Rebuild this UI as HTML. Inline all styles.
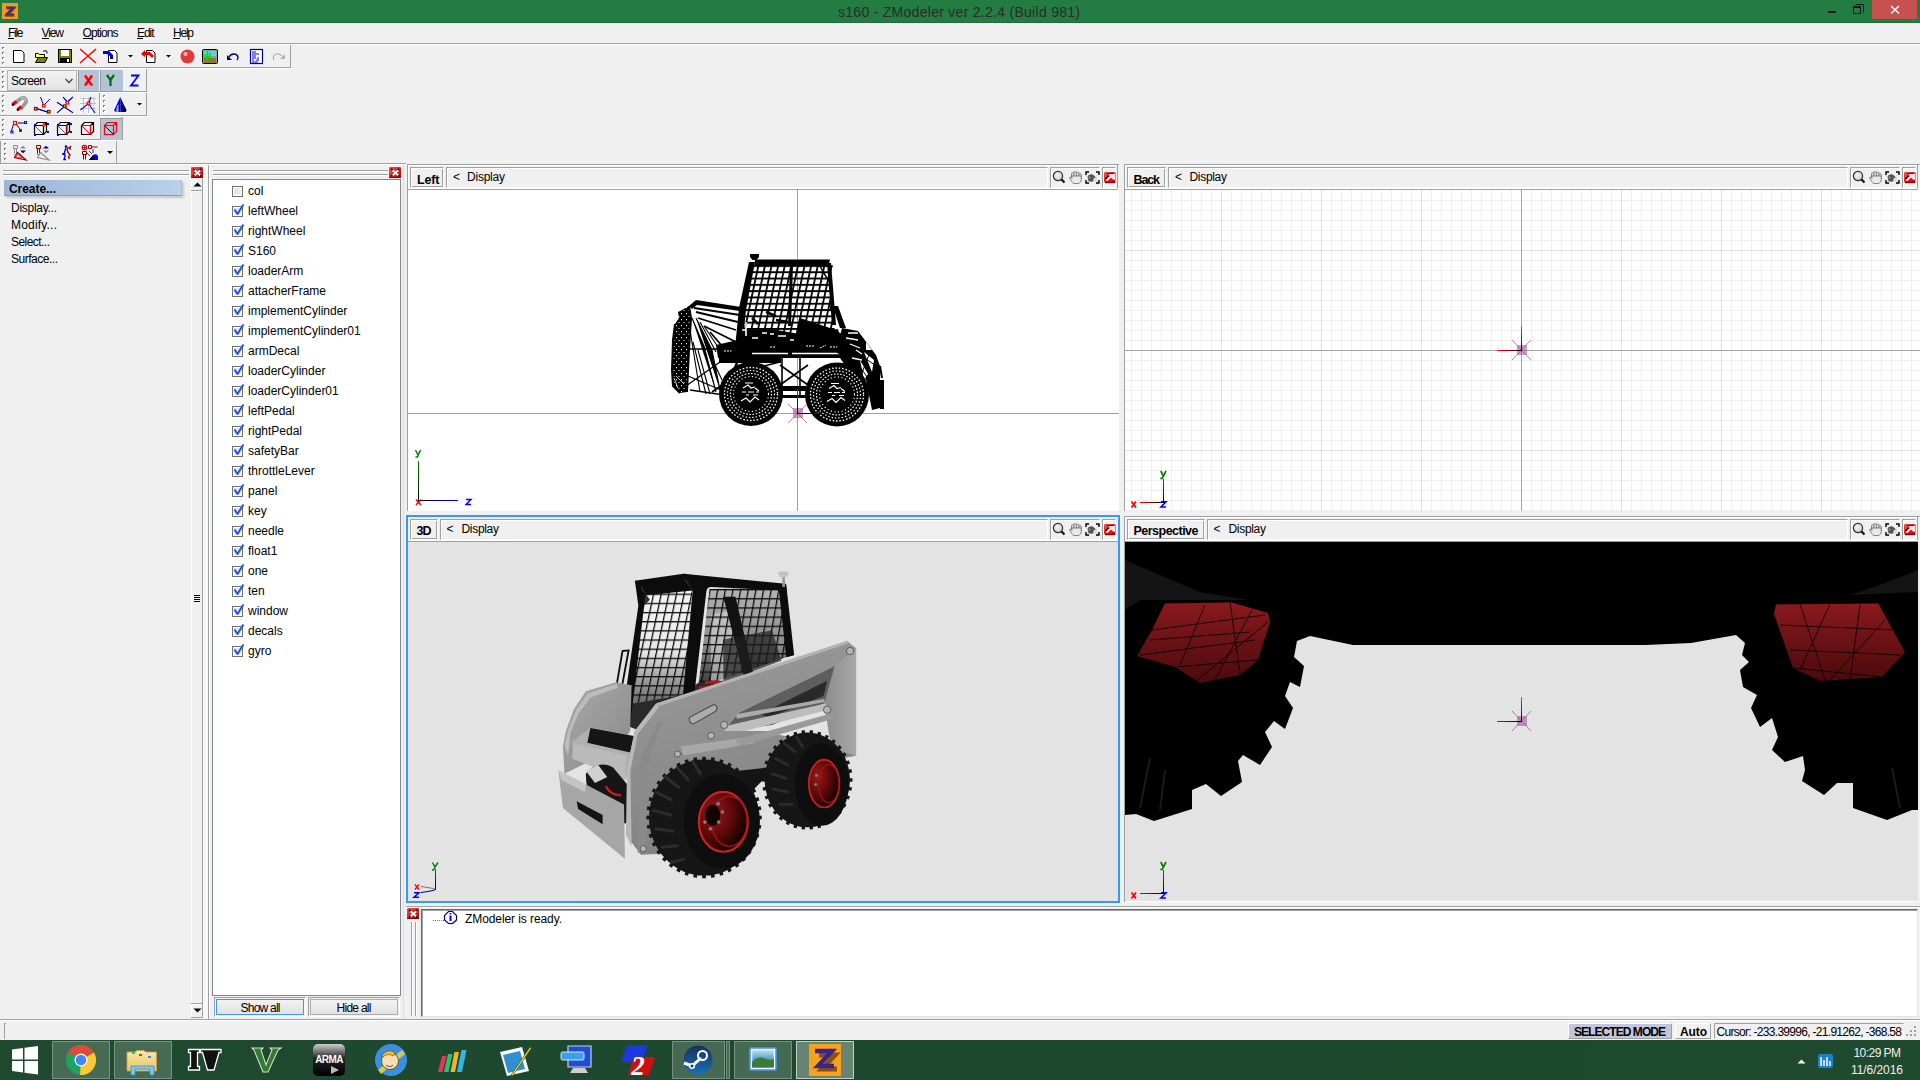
<!DOCTYPE html>
<html><head><meta charset="utf-8">
<style>
*{margin:0;padding:0;box-sizing:border-box}
html,body{width:1920px;height:1080px;overflow:hidden;background:#f0f0f0;font-family:"Liberation Sans",sans-serif;font-size:12px;color:#000}
.a{position:absolute}
.t{position:absolute;white-space:pre;line-height:1}
.hl{position:absolute;height:1px}
.vl{position:absolute;width:1px}
.g{background:#a0a0a0}
.w{background:#fff}
</style></head><body>
<!-- title bar -->
<div class="a" style="left:0;top:0;width:1920px;height:23px;background:#237c41"></div>
<div class="a" style="left:0;top:22px;width:1920px;height:1px;background:#1d6e39"></div>
<!-- window buttons -->
<div class="a" style="left:1872px;top:0;width:45px;height:19px;background:#c75050"></div>
<div class="a" style="left:1828px;top:11px;width:8px;height:2px;background:#1a1a1a"></div>
<svg class="a" style="left:1850px;top:2px" width="16" height="14" viewBox="1850 2 16 14"><path d="M1855.5 4.5h8v8" fill="none" stroke="#1a1a1a"/><rect x="1853.5" y="6.5" width="7" height="7" fill="none" stroke="#1a1a1a"/><rect x="1853" y="6" width="8" height="2" fill="#1a1a1a"/></svg>
<svg class="a" style="left:1889px;top:4px" width="12" height="12" viewBox="1889 4 12 12"><path d="M1891 6L1899 13.5M1899 6L1891 13.5" stroke="#fff" stroke-width="1.5"/></svg>
<!-- app icon -->
<div class="a" style="left:2px;top:3px;width:16px;height:16px;background:#f39a1e"></div>
<svg class="a" style="left:2px;top:3px" width="16" height="16"><path d="M5 5.5h7l-6.5 7h7" fill="none" stroke="#6a4210" stroke-width="2.4" opacity="0.8"/><path d="M4 4.5h7.5l-7 7h7.5" fill="none" stroke="#3c2594" stroke-width="2.2"/></svg>
<!-- menu underlines -->
<div class="hl" style="left:8px;top:38px;width:6px;background:#000"></div>
<div class="hl" style="left:42px;top:38px;width:7px;background:#000"></div>
<div class="hl" style="left:83px;top:38px;width:9px;background:#000"></div>
<div class="hl" style="left:137px;top:38px;width:6px;background:#000"></div>
<div class="hl" style="left:173px;top:38px;width:7px;background:#000"></div>
<div class="hl g" style="left:0;top:43px;width:1920px"></div>
<div class="hl w" style="left:0;top:44px;width:1920px"></div>
<!-- toolbar frames -->
<div class="a" style="left:0;top:45px;width:291px;height:23px;border-right:1px solid #a0a0a0;border-bottom:1px solid #a0a0a0"></div>
<div class="hl w" style="left:0;top:68px;width:292px"></div>
<div class="a" style="left:0;top:69px;width:147px;height:23px;border-right:1px solid #a0a0a0;border-bottom:1px solid #a0a0a0"></div>
<div class="hl w" style="left:0;top:92px;width:148px"></div>
<div class="a" style="left:0;top:93px;width:100px;height:23px;border-right:1px solid #a0a0a0;border-bottom:1px solid #a0a0a0"></div>
<div class="a" style="left:100px;top:93px;width:47px;height:23px;border-right:1px solid #a0a0a0;border-bottom:1px solid #a0a0a0;border-left:1px solid #fff"></div>
<div class="hl w" style="left:0;top:116px;width:148px"></div>
<div class="a" style="left:0;top:117px;width:123px;height:23px;border-right:1px solid #a0a0a0;border-bottom:1px solid #a0a0a0"></div>
<div class="hl w" style="left:0;top:140px;width:124px"></div>
<div class="a" style="left:0;top:141px;width:117px;height:23px;border-right:1px solid #a0a0a0;border-bottom:1px solid #a0a0a0;border-left:1px solid #a0a0a0"></div>
<!-- highlighted buttons -->
<div class="a" style="left:78px;top:70px;width:21px;height:21px;background:#b3c3d5;border-left:1px solid #9a9a9a"></div>
<div class="a" style="left:100px;top:70px;width:23px;height:21px;background:#b3c3d5;border-left:1px solid #9a9a9a"></div>
<div class="a" style="left:100px;top:118px;width:22px;height:22px;background:#b3c3d5;border-left:1px solid #9a9a9a;border-top:1px solid #9a9a9a"></div>
<!-- combo -->
<div class="a" style="left:7px;top:70px;width:70px;height:21px;border:1px solid #b5b5b5;background:linear-gradient(#f2f2f2,#e3e3e3)"></div>
<svg class="a" style="left:0;top:44px" width="300" height="122" viewBox="0 44 300 122">
 <g><rect x="3" y="48" width="2" height="2" fill="#fff"/><path d="M2 47h2v1h-1v1h-1z" fill="#7a7a7a"/><rect x="3" y="53" width="2" height="2" fill="#fff"/><path d="M2 52h2v1h-1v1h-1z" fill="#7a7a7a"/><rect x="3" y="58" width="2" height="2" fill="#fff"/><path d="M2 57h2v1h-1v1h-1z" fill="#7a7a7a"/><rect x="3" y="63" width="2" height="2" fill="#fff"/><path d="M2 62h2v1h-1v1h-1z" fill="#7a7a7a"/><rect x="3" y="72" width="2" height="2" fill="#fff"/><path d="M2 71h2v1h-1v1h-1z" fill="#7a7a7a"/><rect x="3" y="77" width="2" height="2" fill="#fff"/><path d="M2 76h2v1h-1v1h-1z" fill="#7a7a7a"/><rect x="3" y="82" width="2" height="2" fill="#fff"/><path d="M2 81h2v1h-1v1h-1z" fill="#7a7a7a"/><rect x="3" y="87" width="2" height="2" fill="#fff"/><path d="M2 86h2v1h-1v1h-1z" fill="#7a7a7a"/><rect x="3" y="96" width="2" height="2" fill="#fff"/><path d="M2 95h2v1h-1v1h-1z" fill="#7a7a7a"/><rect x="3" y="101" width="2" height="2" fill="#fff"/><path d="M2 100h2v1h-1v1h-1z" fill="#7a7a7a"/><rect x="3" y="106" width="2" height="2" fill="#fff"/><path d="M2 105h2v1h-1v1h-1z" fill="#7a7a7a"/><rect x="3" y="111" width="2" height="2" fill="#fff"/><path d="M2 110h2v1h-1v1h-1z" fill="#7a7a7a"/><rect x="104" y="96" width="2" height="2" fill="#fff"/><path d="M103 95h2v1h-1v1h-1z" fill="#7a7a7a"/><rect x="104" y="101" width="2" height="2" fill="#fff"/><path d="M103 100h2v1h-1v1h-1z" fill="#7a7a7a"/><rect x="104" y="106" width="2" height="2" fill="#fff"/><path d="M103 105h2v1h-1v1h-1z" fill="#7a7a7a"/><rect x="104" y="111" width="2" height="2" fill="#fff"/><path d="M103 110h2v1h-1v1h-1z" fill="#7a7a7a"/><rect x="3" y="120" width="2" height="2" fill="#fff"/><path d="M2 119h2v1h-1v1h-1z" fill="#7a7a7a"/><rect x="3" y="125" width="2" height="2" fill="#fff"/><path d="M2 124h2v1h-1v1h-1z" fill="#7a7a7a"/><rect x="3" y="130" width="2" height="2" fill="#fff"/><path d="M2 129h2v1h-1v1h-1z" fill="#7a7a7a"/><rect x="3" y="135" width="2" height="2" fill="#fff"/><path d="M2 134h2v1h-1v1h-1z" fill="#7a7a7a"/><rect x="5" y="144" width="2" height="2" fill="#fff"/><path d="M4 143h2v1h-1v1h-1z" fill="#7a7a7a"/><rect x="5" y="149" width="2" height="2" fill="#fff"/><path d="M4 148h2v1h-1v1h-1z" fill="#7a7a7a"/><rect x="5" y="154" width="2" height="2" fill="#fff"/><path d="M4 153h2v1h-1v1h-1z" fill="#7a7a7a"/><rect x="5" y="159" width="2" height="2" fill="#fff"/><path d="M4 158h2v1h-1v1h-1z" fill="#7a7a7a"/></g>
 <!-- chevron -->
 <path d="M65.5 79l3.5 3.5 3.5-3.5" fill="none" stroke="#555" stroke-width="1.6"/>
 <!-- new -->
 <path d="M13.5 50.5h8l2.5 2.5v9.5h-10.5z" fill="#fff" stroke="#000"/>
 <!-- open -->
 <path d="M35.5 53.5h3l1 1h5v3h-9z" fill="#ffff60" stroke="#000"/>
 <path d="M35.5 62.5l3-5h9l-2.5 5z" fill="#808000" stroke="#000"/>
 <path d="M43 51.5c1-1 3-1 4 0v2" fill="none" stroke="#000"/>
 <!-- save -->
 <rect x="58.5" y="49.5" width="13" height="13" fill="#808000" stroke="#000"/>
 <rect x="61" y="50" width="8" height="6" fill="#fff"/>
 <rect x="60" y="58" width="10" height="5" fill="#000"/><rect x="67" y="59" width="2" height="3" fill="#fff"/>
 <!-- X -->
 <path d="M80 49l16 14M96 49l-16 14" stroke="#f00" stroke-width="1.5"/>
 <!-- import -->
 <path d="M108.5 50.5h6l2.5 2.5v9.5h-8.5z" fill="#fff" stroke="#000"/>
 <path d="M103 51h6l4 4v4h-3v-3l-3-2h-4z" fill="#0000e0"/>
 <!-- arrows -->
 <path d="M128 55h5l-2.5 2.5z" fill="#000"/>
 <path d="M166 55h5l-2.5 2.5z" fill="#000"/>
 <!-- export -->
 <path d="M146.5 50.5h6l2.5 2.5v9.5h-8.5z" fill="#fff" stroke="#000"/>
 <path d="M141 54l4-4v2h5l4 4-2 2-3-3h-4v2z" fill="#e00"/>
 <!-- red ball -->
 <circle cx="187.5" cy="56.5" r="7" fill="#e23a3a"/><circle cx="185.5" cy="54" r="2" fill="#fbb"/>
 <!-- picture -->
 <rect x="202.5" y="49.5" width="15" height="14" rx="1" fill="#9a9a9a" stroke="#000"/>
 <rect x="204" y="51" width="12" height="5" fill="#40e0e0"/><rect x="204" y="58" width="12" height="5" fill="#8a7a20"/>
 <path d="M207.5 51v11M205 54v3h5v-4" stroke="#00e000" stroke-width="1.5" fill="none"/>
 <!-- undo -->
 <path d="M229 57c2-4 8-4 9 0 0 2-1 3-1 3" fill="none" stroke="#000080" stroke-width="1.4"/>
 <path d="M227 55v5h5z" fill="#000080"/>
 <!-- doc -->
 <rect x="250.5" y="49.5" width="12" height="14" fill="#fff" stroke="#000080" stroke-width="1.2"/>
 <path d="M252 52h4M252 54h7M252 56h4M252 58h4M257 58h2M252 60h2M256 60h3M252 62h6" stroke="#0000ff"/>
 <!-- redo -->
 <path d="M274 60c-2-4 1-7 5-6l3 2" fill="none" stroke="#b0b0b0" stroke-width="1.2"/>
 <path d="M285 54v5h-5z" fill="#b0b0b0"/>
 <!-- X Y Z -->
 <path d="M85 75.5l7 10M92 75.5l-7 10" stroke="#f00" stroke-width="2.4"/>
 <path d="M107 75l3.5 5 3.5-5M110.5 80v6" stroke="#007000" stroke-width="2.2" fill="none"/>
 <path d="M131 75.5h7.5l-7.5 10h7.5" stroke="#0000ff" stroke-width="1.8" fill="none"/>
 <!-- row3 magnet -->
 <path d="M14 103.5L21 98.5C24.5 96.5 27.5 99.5 25.5 103L20.5 109.5" fill="none" stroke="#9a9a9a" stroke-width="3.6"/>
 <path d="M21 98.5C24 97 26 98.5 25.5 101" fill="none" stroke="#d8d8d8" stroke-width="1"/>
 <path d="M12.5 104.5L16.5 101.5M17.5 109.5L21.5 106.5" stroke="#ff0000" stroke-width="3.4"/>
 <path d="M12 105.5l2-1.5M17 110.5l2-1.5" stroke="#000" stroke-width="2"/>
 <!-- snap icons -->
 <path d="M40.5 97L43.5 105M50 99L44.5 104.5M36.5 108.5L47.5 112" stroke="#0000e0" fill="none"/>
 <path d="M36.5 108.5L47.5 112" stroke="#000080" stroke-width="1.2"/>
 <rect x="42.5" y="104.5" width="2.5" height="2.5" fill="#fff" stroke="#ff0000" stroke-width="1.2"/>
 <rect x="34.5" y="107.5" width="2.5" height="2.5" fill="#ffff00" stroke="#800000" stroke-width="1.2"/>
 <rect x="47.5" y="110.5" width="2.5" height="2.5" fill="#ffff00" stroke="#800000" stroke-width="1.2"/>
 <path d="M57 102.2L73 112.8M57 112.8L64.5 106.5M63 97L67.4 102M73 97L67.4 102" stroke="#000080" fill="none" stroke-width="1.1"/>
 <path d="M63 97L67.4 102M73 97L67.4 102" stroke="#0000ff" fill="none"/>
 <rect x="66" y="101.5" width="2.5" height="2.5" fill="#fff" stroke="#ff0000" stroke-width="1.2"/>
 <rect x="63.5" y="105" width="2.5" height="2.5" fill="#ffff00" stroke="#800000" stroke-width="1.2"/>
 <rect x="80" y="97" width="16" height="16" fill="#f8f8f8"/>
 <path d="M83.5 97v16M88.5 97v16M94 97v16M80 98.5h16M80 103.5h16M80 108.5h16" stroke="#c0c0c0"/>
 <path d="M80.5 110L88.5 103.5L91 97M88.5 103.5L95 113" stroke="#0000e0" fill="none" stroke-width="1.1"/>
 <rect x="87.2" y="102.2" width="2.6" height="2.6" fill="#fff" stroke="#ff0000" stroke-width="1.2"/>
 <!-- cone -->
 <path d="M120.3 97L114 110.5Q115 112 118 112H120.5z" fill="#0000ff"/>
 <path d="M120.3 97L126.5 110.5Q126 112 122.5 112H120.5z" fill="#000090"/>
 <path d="M124.5 106L126.5 110.5Q126 112 124 112z" fill="#000"/>
 <path d="M117 106.5L116 111.5L118.5 112L118.5 104z" fill="#b8b8b8"/>
 <path d="M137 103h5l-2.5 2.5z" fill="#000"/>
 <!-- row4 -->
 <path d="M18 123h7M14.5 123l0 0M14 123l-3 9" stroke="#000080" fill="none"/>
 <path d="M16 124l4 5" stroke="#000080"/>
 <rect x="13.5" y="121.5" width="3" height="3" fill="#fff" stroke="#f00" stroke-width="1.2"/><rect x="24.5" y="121.5" width="2" height="2" fill="#fff" stroke="#00f"/><rect x="11" y="131" width="2" height="2" fill="#fff" stroke="#00f"/><rect x="19.5" y="129.5" width="2" height="2" fill="#000" stroke="#f00"/>
 <g fill="none" stroke="#000" stroke-width="1.2">
  <path d="M34.5 125.5h9v9h-9zM34.5 125.5l3-3h9v9l-3 3M43.5 125.5l3-3"/>
  <path d="M57.5 125.5h9v9h-9zM57.5 125.5l3-3h9v9l-3 3M66.5 125.5l3-3"/>
  <path d="M81.5 125.5h9v9h-9zM81.5 125.5l3-3h9v9l-3 3M90.5 125.5l3-3"/>
 </g>
 <path d="M35 126l8 8M58 126l8 8" stroke="#555"/>
 <path d="M67 125v10" stroke="#f00" stroke-width="1.2"/>
 <rect x="43" y="124" width="2" height="2" fill="#fff" stroke="#f00"/>
 <g fill="#00f"><rect x="34" y="124" width="2" height="2"/><rect x="47" y="123" width="2" height="2"/><rect x="47" y="131" width="2" height="2"/><rect x="57" y="124" width="2" height="2"/><rect x="70" y="123" width="2" height="2"/><rect x="70" y="131" width="2" height="2"/><rect x="34" y="134" width="2" height="2"/><rect x="57" y="134" width="2" height="2"/></g>
 <path d="M81.5 125.5h9v9M81.5 125.5l9 9" stroke="#f00" fill="none"/>
 <g fill="none" stroke="#f00" stroke-width="1.2"><path d="M104.5 125.5h9v9h-9zM104.5 125.5l3-3h9v9l-3 3M113.5 125.5l3-3"/></g>
 <path d="M105 126l8 8" stroke="#000"/>
 <!-- row5 -->
 <path d="M13.5 145.5h4v3h-4zM14.5 148.5v5l1 2M16.5 148.5v5" fill="none" stroke="#8c8c8c"/>
 <path d="M14.5 157.5l3-5 8.5 7.5z" fill="none" stroke="#900000" stroke-width="1.2"/><path d="M16 157l2-3 4 4z" fill="none" stroke="#ff2020" stroke-width="0.8"/>
 <path d="M20 148.5l3-2.8 3 2.8z" fill="#8c8c8c"/><path d="M20 150.5l3 2.8 3-2.8z" fill="#000080"/>
 <path d="M36.5 145.5h4v3h-4zM37.5 148.5v5l1 2M39.5 148.5v5" fill="none" stroke="#900000"/>
 <path d="M37.5 157.5l3-5 8.5 7.5z" fill="none" stroke="#909090" stroke-width="1.2"/>
 <path d="M43 148.5l3-2.8 3 2.8z" fill="#000080"/><path d="M43 150.5l3 2.8 3-2.8z" fill="#8c8c8c"/>
 <circle cx="66" cy="146.5" r="1.3" fill="#0000e0"/>
 <path d="M66 147.5l-1.5 5-1.5 2.5M64.5 152.5l0.5 4-1 3h2M63 155v-2" stroke="#0000e0" stroke-width="1.4" fill="none"/>
 <path d="M67 148h2.5l1.5-2M67 149l1 3.5 2 2.5-1.5 2 1 2M69.5 148.5l1.5 1" stroke="#900000" stroke-width="1.4" fill="none"/>
 <circle cx="84.5" cy="147.5" r="2.3" fill="none" stroke="#c00000" stroke-width="1.1"/><path d="M82.5 147.5h4M84.5 145.5v4" stroke="#c00000" stroke-width="0.8"/>
 <path d="M88.5 145.5h3v3h-3zM91.5 147h6" fill="none" stroke="#900000"/>
 <path d="M82.5 151.5h4v3h-4zM83.5 154.5v5M85.5 154.5v5" fill="none" stroke="#900000"/>
 <path d="M87 153l3 3M89 151l3 3M93 149v4" stroke="#222" stroke-width="0.9"/>
 <path d="M89 160l4-5 3-1 2 2v4z" fill="#0000ff"/><path d="M89 160l4-5 1 5z" fill="#000"/>
 <path d="M107 151h6l-3 3z" fill="#000"/>
</svg>
<!-- top separator of dock area -->
<div class="hl g" style="left:0;top:163px;width:406px"></div>
<div class="hl w" style="left:0;top:164px;width:406px"></div>
<!-- left panel -->
<div class="hl" style="left:3px;top:170px;width:186px;background:#a0a0a0;box-shadow:0 1px 0 #fff"></div>
<div class="hl" style="left:3px;top:174px;width:186px;background:#a0a0a0;box-shadow:0 1px 0 #fff"></div>
<!-- close btn -->
<svg class="a" style="left:191px;top:167px" width="13" height="12" viewBox="0 0 13 12"><defs><linearGradient id="rg" x1="0" y1="0" x2="1" y2="1"><stop offset="0" stop-color="#ff5050"/><stop offset="1" stop-color="#b00000"/></linearGradient></defs><rect x="0" y="0" width="12" height="11" rx="1" fill="url(#rg)"/><rect x="0" y="10" width="12" height="1" fill="#8a0000"/><path d="M2 1.8l8 7.4M10 1.8l-8 7.4" stroke="#000" stroke-width="1.5"/><path d="M3.6 3.2l5.6 5.2M9.2 3.2l-5.6 5.2" stroke="#fff" stroke-width="1.9"/></svg>
<!-- create highlight -->
<div class="a" style="left:4px;top:180px;width:178px;height:16px;background:linear-gradient(90deg,#9db6d6,#b9d0ea);border-bottom:1px solid #8aa0bb;border-right:1px solid #a9bdd6;box-shadow:2px 2px 2px #c8c8c8"></div>
<!-- left scroll column -->
<div class="vl w" style="left:191px;top:179px;height:838px"></div>
<div class="vl" style="left:202px;top:179px;height:838px;background:#a0a0a0"></div>
<div class="hl" style="left:191px;top:190px;width:11px;background:#a0a0a0;box-shadow:0 1px 0 #fff"></div>
<svg class="a" style="left:193px;top:181px" width="9" height="6"><path d="M0.5 5.5L4.5 1.5L8.5 5.5z" fill="#000"/></svg>
<div class="hl" style="left:191px;top:1003px;width:11px;background:#a0a0a0;box-shadow:0 1px 0 #fff"></div>
<div class="hl" style="left:191px;top:1017px;width:12px;background:#a0a0a0"></div>
<svg class="a" style="left:193px;top:1008px" width="9" height="6"><path d="M0.5 0.5L4.5 4.5L8.5 0.5z" fill="#000"/></svg>
<div class="a" style="left:194px;top:595px;width:6px;height:7px;background:repeating-linear-gradient(#000 0,#000 1px,transparent 1px,transparent 2px)"></div>
<!-- splitter -->
<div class="a" style="left:203px;top:165px;width:5px;height:854px;background:#f7f7f7"></div>
<div class="vl" style="left:208px;top:165px;height:854px;background:#a0a0a0"></div>
<div class="vl w" style="left:209px;top:165px;height:854px"></div>
<!-- list panel -->
<div class="hl" style="left:213px;top:170px;width:175px;background:#a0a0a0;box-shadow:0 1px 0 #fff"></div>
<div class="hl" style="left:213px;top:174px;width:175px;background:#a0a0a0;box-shadow:0 1px 0 #fff"></div>
<svg class="a" style="left:389px;top:167px" width="13" height="12" viewBox="0 0 13 12"><rect x="0" y="0" width="12" height="11" rx="1" fill="url(#rg)"/><rect x="0" y="10" width="12" height="1" fill="#8a0000"/><path d="M2 1.8l8 7.4M10 1.8l-8 7.4" stroke="#000" stroke-width="1.5"/><path d="M3.6 3.2l5.6 5.2M9.2 3.2l-5.6 5.2" stroke="#fff" stroke-width="1.9"/></svg>
<div class="a" style="left:212px;top:179px;width:189px;height:817px;background:#fff;border:1px solid #828790"></div>
<!-- buttons -->
<div class="a" style="left:214px;top:997px;width:92px;height:20px;border-top:1px solid #a0a0a0;border-left:1px solid #a0a0a0;border-right:1px solid #fff;border-bottom:1px solid #fff"></div>
<div class="a" style="left:216px;top:999px;width:88px;height:16px;border:1px solid #3399ff;background:linear-gradient(#f2f2f2,#e2e2e2)"></div>
<div class="a" style="left:308px;top:997px;width:92px;height:20px;border-top:1px solid #a0a0a0;border-left:1px solid #a0a0a0;border-right:1px solid #fff;border-bottom:1px solid #fff"></div>
<div class="a" style="left:310px;top:999px;width:88px;height:16px;border:1px solid #acacac;background:linear-gradient(#f2f2f2,#e2e2e2)"></div>
<!-- splitter between list and viewports -->
<div class="vl" style="left:403px;top:165px;height:854px;background:#dcdcdc"></div>
<!-- bottom line of dock -->
<div class="hl g" style="left:0;top:1019px;width:1920px"></div>
<div class="hl w" style="left:0;top:1020px;width:1920px"></div>
<div class="a" style="left:232px;top:186px;width:11px;height:11px;border:1px solid #707070;background:linear-gradient(135deg,#dcdcdc,#f4f4f4);box-shadow:inset 0 0 0 1px #fff"></div>
<div class="a" style="left:232px;top:206px;width:11px;height:11px;border:1px solid #707070;background:linear-gradient(135deg,#dcdcdc,#f4f4f4);box-shadow:inset 0 0 0 1px #fff"></div>
<svg class="a" style="left:233px;top:203px" width="12" height="13"><path d="M1.5 6.5L4.5 11L10.5 1.5" fill="none" stroke="#1c55e6" stroke-width="2" stroke-linejoin="round"/></svg>
<div class="a" style="left:232px;top:226px;width:11px;height:11px;border:1px solid #707070;background:linear-gradient(135deg,#dcdcdc,#f4f4f4);box-shadow:inset 0 0 0 1px #fff"></div>
<svg class="a" style="left:233px;top:223px" width="12" height="13"><path d="M1.5 6.5L4.5 11L10.5 1.5" fill="none" stroke="#1c55e6" stroke-width="2" stroke-linejoin="round"/></svg>
<div class="a" style="left:232px;top:246px;width:11px;height:11px;border:1px solid #707070;background:linear-gradient(135deg,#dcdcdc,#f4f4f4);box-shadow:inset 0 0 0 1px #fff"></div>
<svg class="a" style="left:233px;top:243px" width="12" height="13"><path d="M1.5 6.5L4.5 11L10.5 1.5" fill="none" stroke="#1c55e6" stroke-width="2" stroke-linejoin="round"/></svg>
<div class="a" style="left:232px;top:266px;width:11px;height:11px;border:1px solid #707070;background:linear-gradient(135deg,#dcdcdc,#f4f4f4);box-shadow:inset 0 0 0 1px #fff"></div>
<svg class="a" style="left:233px;top:263px" width="12" height="13"><path d="M1.5 6.5L4.5 11L10.5 1.5" fill="none" stroke="#1c55e6" stroke-width="2" stroke-linejoin="round"/></svg>
<div class="a" style="left:232px;top:286px;width:11px;height:11px;border:1px solid #707070;background:linear-gradient(135deg,#dcdcdc,#f4f4f4);box-shadow:inset 0 0 0 1px #fff"></div>
<svg class="a" style="left:233px;top:283px" width="12" height="13"><path d="M1.5 6.5L4.5 11L10.5 1.5" fill="none" stroke="#1c55e6" stroke-width="2" stroke-linejoin="round"/></svg>
<div class="a" style="left:232px;top:306px;width:11px;height:11px;border:1px solid #707070;background:linear-gradient(135deg,#dcdcdc,#f4f4f4);box-shadow:inset 0 0 0 1px #fff"></div>
<svg class="a" style="left:233px;top:303px" width="12" height="13"><path d="M1.5 6.5L4.5 11L10.5 1.5" fill="none" stroke="#1c55e6" stroke-width="2" stroke-linejoin="round"/></svg>
<div class="a" style="left:232px;top:326px;width:11px;height:11px;border:1px solid #707070;background:linear-gradient(135deg,#dcdcdc,#f4f4f4);box-shadow:inset 0 0 0 1px #fff"></div>
<svg class="a" style="left:233px;top:323px" width="12" height="13"><path d="M1.5 6.5L4.5 11L10.5 1.5" fill="none" stroke="#1c55e6" stroke-width="2" stroke-linejoin="round"/></svg>
<div class="a" style="left:232px;top:346px;width:11px;height:11px;border:1px solid #707070;background:linear-gradient(135deg,#dcdcdc,#f4f4f4);box-shadow:inset 0 0 0 1px #fff"></div>
<svg class="a" style="left:233px;top:343px" width="12" height="13"><path d="M1.5 6.5L4.5 11L10.5 1.5" fill="none" stroke="#1c55e6" stroke-width="2" stroke-linejoin="round"/></svg>
<div class="a" style="left:232px;top:366px;width:11px;height:11px;border:1px solid #707070;background:linear-gradient(135deg,#dcdcdc,#f4f4f4);box-shadow:inset 0 0 0 1px #fff"></div>
<svg class="a" style="left:233px;top:363px" width="12" height="13"><path d="M1.5 6.5L4.5 11L10.5 1.5" fill="none" stroke="#1c55e6" stroke-width="2" stroke-linejoin="round"/></svg>
<div class="a" style="left:232px;top:386px;width:11px;height:11px;border:1px solid #707070;background:linear-gradient(135deg,#dcdcdc,#f4f4f4);box-shadow:inset 0 0 0 1px #fff"></div>
<svg class="a" style="left:233px;top:383px" width="12" height="13"><path d="M1.5 6.5L4.5 11L10.5 1.5" fill="none" stroke="#1c55e6" stroke-width="2" stroke-linejoin="round"/></svg>
<div class="a" style="left:232px;top:406px;width:11px;height:11px;border:1px solid #707070;background:linear-gradient(135deg,#dcdcdc,#f4f4f4);box-shadow:inset 0 0 0 1px #fff"></div>
<svg class="a" style="left:233px;top:403px" width="12" height="13"><path d="M1.5 6.5L4.5 11L10.5 1.5" fill="none" stroke="#1c55e6" stroke-width="2" stroke-linejoin="round"/></svg>
<div class="a" style="left:232px;top:426px;width:11px;height:11px;border:1px solid #707070;background:linear-gradient(135deg,#dcdcdc,#f4f4f4);box-shadow:inset 0 0 0 1px #fff"></div>
<svg class="a" style="left:233px;top:423px" width="12" height="13"><path d="M1.5 6.5L4.5 11L10.5 1.5" fill="none" stroke="#1c55e6" stroke-width="2" stroke-linejoin="round"/></svg>
<div class="a" style="left:232px;top:446px;width:11px;height:11px;border:1px solid #707070;background:linear-gradient(135deg,#dcdcdc,#f4f4f4);box-shadow:inset 0 0 0 1px #fff"></div>
<svg class="a" style="left:233px;top:443px" width="12" height="13"><path d="M1.5 6.5L4.5 11L10.5 1.5" fill="none" stroke="#1c55e6" stroke-width="2" stroke-linejoin="round"/></svg>
<div class="a" style="left:232px;top:466px;width:11px;height:11px;border:1px solid #707070;background:linear-gradient(135deg,#dcdcdc,#f4f4f4);box-shadow:inset 0 0 0 1px #fff"></div>
<svg class="a" style="left:233px;top:463px" width="12" height="13"><path d="M1.5 6.5L4.5 11L10.5 1.5" fill="none" stroke="#1c55e6" stroke-width="2" stroke-linejoin="round"/></svg>
<div class="a" style="left:232px;top:486px;width:11px;height:11px;border:1px solid #707070;background:linear-gradient(135deg,#dcdcdc,#f4f4f4);box-shadow:inset 0 0 0 1px #fff"></div>
<svg class="a" style="left:233px;top:483px" width="12" height="13"><path d="M1.5 6.5L4.5 11L10.5 1.5" fill="none" stroke="#1c55e6" stroke-width="2" stroke-linejoin="round"/></svg>
<div class="a" style="left:232px;top:506px;width:11px;height:11px;border:1px solid #707070;background:linear-gradient(135deg,#dcdcdc,#f4f4f4);box-shadow:inset 0 0 0 1px #fff"></div>
<svg class="a" style="left:233px;top:503px" width="12" height="13"><path d="M1.5 6.5L4.5 11L10.5 1.5" fill="none" stroke="#1c55e6" stroke-width="2" stroke-linejoin="round"/></svg>
<div class="a" style="left:232px;top:526px;width:11px;height:11px;border:1px solid #707070;background:linear-gradient(135deg,#dcdcdc,#f4f4f4);box-shadow:inset 0 0 0 1px #fff"></div>
<svg class="a" style="left:233px;top:523px" width="12" height="13"><path d="M1.5 6.5L4.5 11L10.5 1.5" fill="none" stroke="#1c55e6" stroke-width="2" stroke-linejoin="round"/></svg>
<div class="a" style="left:232px;top:546px;width:11px;height:11px;border:1px solid #707070;background:linear-gradient(135deg,#dcdcdc,#f4f4f4);box-shadow:inset 0 0 0 1px #fff"></div>
<svg class="a" style="left:233px;top:543px" width="12" height="13"><path d="M1.5 6.5L4.5 11L10.5 1.5" fill="none" stroke="#1c55e6" stroke-width="2" stroke-linejoin="round"/></svg>
<div class="a" style="left:232px;top:566px;width:11px;height:11px;border:1px solid #707070;background:linear-gradient(135deg,#dcdcdc,#f4f4f4);box-shadow:inset 0 0 0 1px #fff"></div>
<svg class="a" style="left:233px;top:563px" width="12" height="13"><path d="M1.5 6.5L4.5 11L10.5 1.5" fill="none" stroke="#1c55e6" stroke-width="2" stroke-linejoin="round"/></svg>
<div class="a" style="left:232px;top:586px;width:11px;height:11px;border:1px solid #707070;background:linear-gradient(135deg,#dcdcdc,#f4f4f4);box-shadow:inset 0 0 0 1px #fff"></div>
<svg class="a" style="left:233px;top:583px" width="12" height="13"><path d="M1.5 6.5L4.5 11L10.5 1.5" fill="none" stroke="#1c55e6" stroke-width="2" stroke-linejoin="round"/></svg>
<div class="a" style="left:232px;top:606px;width:11px;height:11px;border:1px solid #707070;background:linear-gradient(135deg,#dcdcdc,#f4f4f4);box-shadow:inset 0 0 0 1px #fff"></div>
<svg class="a" style="left:233px;top:603px" width="12" height="13"><path d="M1.5 6.5L4.5 11L10.5 1.5" fill="none" stroke="#1c55e6" stroke-width="2" stroke-linejoin="round"/></svg>
<div class="a" style="left:232px;top:626px;width:11px;height:11px;border:1px solid #707070;background:linear-gradient(135deg,#dcdcdc,#f4f4f4);box-shadow:inset 0 0 0 1px #fff"></div>
<svg class="a" style="left:233px;top:623px" width="12" height="13"><path d="M1.5 6.5L4.5 11L10.5 1.5" fill="none" stroke="#1c55e6" stroke-width="2" stroke-linejoin="round"/></svg>
<div class="a" style="left:232px;top:646px;width:11px;height:11px;border:1px solid #707070;background:linear-gradient(135deg,#dcdcdc,#f4f4f4);box-shadow:inset 0 0 0 1px #fff"></div>
<svg class="a" style="left:233px;top:643px" width="12" height="13"><path d="M1.5 6.5L4.5 11L10.5 1.5" fill="none" stroke="#1c55e6" stroke-width="2" stroke-linejoin="round"/></svg>
<div class="a" style="left:407px;top:164px;width:712px;height:347px;border-top:1px solid #a0a0a0;border-left:1px solid #a0a0a0;box-shadow:inset 1px 1px 0 #fff;background:#f0f0f0"></div>
<div class="a" style="left:1117px;top:164px;width:1px;height:25px;background:#a0a0a0"></div>
<div class="a" style="left:408px;top:188px;width:710px;height:1px;background:#fff"></div>
<div class="a" style="left:408px;top:189px;width:710px;height:1px;background:#a0a0a0"></div>
<div class="a" style="left:410px;top:167px;width:34px;height:21px;border-top:1px solid #a0a0a0;border-left:1px solid #a0a0a0;border-bottom:1px solid #fff;border-right:1px solid #fff;box-shadow:inset 1px 1px 0 #fff,inset -1px -1px 0 #a0a0a0;background:#f0f0f0"></div>
<div class="a" style="left:446px;top:167px;width:602px;height:21px;border-top:1px solid #a0a0a0;border-left:1px solid #a0a0a0;border-bottom:1px solid #fff;border-right:1px solid #fff;box-shadow:inset 1px 1px 0 #fff;background:#f0f0f0"></div>
<div class="a" style="left:1050px;top:167px;width:50px;height:21px;border-top:1px solid #a0a0a0;border-left:1px solid #a0a0a0;border-bottom:1px solid #fff;border-right:1px solid #fff;box-shadow:inset 1px 1px 0 #fff;background:#f0f0f0"></div>
<div class="a" style="left:1102px;top:167px;width:14px;height:21px;border-top:1px solid #a0a0a0;border-left:1px solid #a0a0a0;border-bottom:1px solid #fff;border-right:1px solid #fff;box-shadow:inset 1px 1px 0 #fff;background:#f0f0f0"></div>
<svg class="a" style="left:1052px;top:170px" width="64" height="16" viewBox="0 0 64 16">
<defs><radialGradient id="lg1050167" cx="0.4" cy="0.4" r="0.6"><stop offset="0" stop-color="#fafafa"/><stop offset="1" stop-color="#c8c8c8"/></radialGradient>
<linearGradient id="rb1050167" x1="0" y1="0" x2="1" y2="1"><stop offset="0" stop-color="#ff4a4a"/><stop offset="1" stop-color="#c00000"/></linearGradient></defs>
<circle cx="6" cy="6" r="4.6" fill="url(#lg1050167)" stroke="#333" stroke-width="1.2"/><path d="M9.2 9.2l3.3 3.3" stroke="#111" stroke-width="2.2"/>
<g fill="#e8e8e8" stroke="#6a6a6a" stroke-width="0.8"><rect x="19.5" y="2.5" width="2.4" height="7" rx="1.2"/><rect x="22" y="1.5" width="2.4" height="8" rx="1.2"/><rect x="24.5" y="2" width="2.4" height="8" rx="1.2"/><rect x="27" y="3.5" width="2.2" height="6.5" rx="1.1"/><path d="M17.5 7.5c1-1 2 0 2.5 1V6h9.2v3.5c0 2-1 4-3 4h-4.5c-1.5-1-3-3-4.2-6z"/></g><path d="M20.5 8h8" stroke="#e8e8e8" stroke-width="1.5"/>
<path d="M34 5V2h3M44 2h3v3M34 10v3h3M44 13h3v-3" fill="none" stroke="#000" stroke-width="1.4"/>
<rect x="39" y="7" width="6" height="5" fill="#ddd"/><path d="M35.5 7c0.5-2.5 4-3.5 6-2l2.5 2.5-2.5 0.5v2.5c-1 1.5-3.5 1.5-5 0.5z" fill="#555"/><circle cx="37.5" cy="7.5" r="1" fill="#999"/>
<rect x="52" y="2" width="11.5" height="10.5" rx="1.2" fill="url(#rb1050167)"/><rect x="53" y="12" width="10" height="1.2" fill="#7a0000"/>
<path d="M54.5 10.5L59.5 5.5M57.5 4.5h4.5v4.5z" stroke="#ffe0e0" stroke-width="2" fill="#ffe0e0" stroke-linejoin="round"/>
<path d="M55 3.5h6.5M53.5 9l3.5-3.5" stroke="#000" stroke-width="1.1"/>
</svg>
<div class="a" style="left:1124px;top:164px;width:796px;height:347px;border-top:1px solid #a0a0a0;border-left:1px solid #a0a0a0;box-shadow:inset 1px 1px 0 #fff;background:#f0f0f0"></div>
<div class="a" style="left:1917px;top:164px;width:1px;height:26px;background:#a0a0a0"></div>
<div class="a" style="left:1125px;top:188px;width:793px;height:1px;background:#fff"></div>
<div class="a" style="left:1125px;top:189px;width:793px;height:1px;background:#a0a0a0"></div>
<div class="a" style="left:1127px;top:167px;width:39px;height:21px;border-top:1px solid #a0a0a0;border-left:1px solid #a0a0a0;border-bottom:1px solid #fff;border-right:1px solid #fff;box-shadow:inset 1px 1px 0 #fff,inset -1px -1px 0 #a0a0a0;background:#f0f0f0"></div>
<div class="a" style="left:1168px;top:167px;width:680px;height:21px;border-top:1px solid #a0a0a0;border-left:1px solid #a0a0a0;border-bottom:1px solid #fff;border-right:1px solid #fff;box-shadow:inset 1px 1px 0 #fff;background:#f0f0f0"></div>
<div class="a" style="left:1850px;top:167px;width:50px;height:21px;border-top:1px solid #a0a0a0;border-left:1px solid #a0a0a0;border-bottom:1px solid #fff;border-right:1px solid #fff;box-shadow:inset 1px 1px 0 #fff;background:#f0f0f0"></div>
<div class="a" style="left:1902px;top:167px;width:14px;height:21px;border-top:1px solid #a0a0a0;border-left:1px solid #a0a0a0;border-bottom:1px solid #fff;border-right:1px solid #fff;box-shadow:inset 1px 1px 0 #fff;background:#f0f0f0"></div>
<svg class="a" style="left:1852px;top:170px" width="64" height="16" viewBox="0 0 64 16">
<defs><radialGradient id="lg1850167" cx="0.4" cy="0.4" r="0.6"><stop offset="0" stop-color="#fafafa"/><stop offset="1" stop-color="#c8c8c8"/></radialGradient>
<linearGradient id="rb1850167" x1="0" y1="0" x2="1" y2="1"><stop offset="0" stop-color="#ff4a4a"/><stop offset="1" stop-color="#c00000"/></linearGradient></defs>
<circle cx="6" cy="6" r="4.6" fill="url(#lg1850167)" stroke="#333" stroke-width="1.2"/><path d="M9.2 9.2l3.3 3.3" stroke="#111" stroke-width="2.2"/>
<g fill="#e8e8e8" stroke="#6a6a6a" stroke-width="0.8"><rect x="19.5" y="2.5" width="2.4" height="7" rx="1.2"/><rect x="22" y="1.5" width="2.4" height="8" rx="1.2"/><rect x="24.5" y="2" width="2.4" height="8" rx="1.2"/><rect x="27" y="3.5" width="2.2" height="6.5" rx="1.1"/><path d="M17.5 7.5c1-1 2 0 2.5 1V6h9.2v3.5c0 2-1 4-3 4h-4.5c-1.5-1-3-3-4.2-6z"/></g><path d="M20.5 8h8" stroke="#e8e8e8" stroke-width="1.5"/>
<path d="M34 5V2h3M44 2h3v3M34 10v3h3M44 13h3v-3" fill="none" stroke="#000" stroke-width="1.4"/>
<rect x="39" y="7" width="6" height="5" fill="#ddd"/><path d="M35.5 7c0.5-2.5 4-3.5 6-2l2.5 2.5-2.5 0.5v2.5c-1 1.5-3.5 1.5-5 0.5z" fill="#555"/><circle cx="37.5" cy="7.5" r="1" fill="#999"/>
<rect x="52" y="2" width="11.5" height="10.5" rx="1.2" fill="url(#rb1850167)"/><rect x="53" y="12" width="10" height="1.2" fill="#7a0000"/>
<path d="M54.5 10.5L59.5 5.5M57.5 4.5h4.5v4.5z" stroke="#ffe0e0" stroke-width="2" fill="#ffe0e0" stroke-linejoin="round"/>
<path d="M55 3.5h6.5M53.5 9l3.5-3.5" stroke="#000" stroke-width="1.1"/>
</svg>
<div class="a" style="left:406px;top:515px;width:714px;height:388px;border:2px solid #3399ff;background:#f0f0f0"></div>
<div class="a" style="left:408px;top:540px;width:710px;height:1px;background:#fff"></div>
<div class="a" style="left:408px;top:541px;width:710px;height:1px;background:#a0a0a0"></div>
<div class="a" style="left:410px;top:519px;width:28px;height:21px;border-top:1px solid #a0a0a0;border-left:1px solid #a0a0a0;border-bottom:1px solid #fff;border-right:1px solid #fff;box-shadow:inset 1px 1px 0 #fff,inset -1px -1px 0 #a0a0a0;background:#f0f0f0"></div>
<div class="a" style="left:440px;top:519px;width:608px;height:21px;border-top:1px solid #a0a0a0;border-left:1px solid #a0a0a0;border-bottom:1px solid #fff;border-right:1px solid #fff;box-shadow:inset 1px 1px 0 #fff;background:#f0f0f0"></div>
<div class="a" style="left:1050px;top:519px;width:50px;height:21px;border-top:1px solid #a0a0a0;border-left:1px solid #a0a0a0;border-bottom:1px solid #fff;border-right:1px solid #fff;box-shadow:inset 1px 1px 0 #fff;background:#f0f0f0"></div>
<div class="a" style="left:1102px;top:519px;width:14px;height:21px;border-top:1px solid #a0a0a0;border-left:1px solid #a0a0a0;border-bottom:1px solid #fff;border-right:1px solid #fff;box-shadow:inset 1px 1px 0 #fff;background:#f0f0f0"></div>
<svg class="a" style="left:1052px;top:522px" width="64" height="16" viewBox="0 0 64 16">
<defs><radialGradient id="lg1050519" cx="0.4" cy="0.4" r="0.6"><stop offset="0" stop-color="#fafafa"/><stop offset="1" stop-color="#c8c8c8"/></radialGradient>
<linearGradient id="rb1050519" x1="0" y1="0" x2="1" y2="1"><stop offset="0" stop-color="#ff4a4a"/><stop offset="1" stop-color="#c00000"/></linearGradient></defs>
<circle cx="6" cy="6" r="4.6" fill="url(#lg1050519)" stroke="#333" stroke-width="1.2"/><path d="M9.2 9.2l3.3 3.3" stroke="#111" stroke-width="2.2"/>
<g fill="#e8e8e8" stroke="#6a6a6a" stroke-width="0.8"><rect x="19.5" y="2.5" width="2.4" height="7" rx="1.2"/><rect x="22" y="1.5" width="2.4" height="8" rx="1.2"/><rect x="24.5" y="2" width="2.4" height="8" rx="1.2"/><rect x="27" y="3.5" width="2.2" height="6.5" rx="1.1"/><path d="M17.5 7.5c1-1 2 0 2.5 1V6h9.2v3.5c0 2-1 4-3 4h-4.5c-1.5-1-3-3-4.2-6z"/></g><path d="M20.5 8h8" stroke="#e8e8e8" stroke-width="1.5"/>
<path d="M34 5V2h3M44 2h3v3M34 10v3h3M44 13h3v-3" fill="none" stroke="#000" stroke-width="1.4"/>
<rect x="39" y="7" width="6" height="5" fill="#ddd"/><path d="M35.5 7c0.5-2.5 4-3.5 6-2l2.5 2.5-2.5 0.5v2.5c-1 1.5-3.5 1.5-5 0.5z" fill="#555"/><circle cx="37.5" cy="7.5" r="1" fill="#999"/>
<rect x="52" y="2" width="11.5" height="10.5" rx="1.2" fill="url(#rb1050519)"/><rect x="53" y="12" width="10" height="1.2" fill="#7a0000"/>
<path d="M54.5 10.5L59.5 5.5M57.5 4.5h4.5v4.5z" stroke="#ffe0e0" stroke-width="2" fill="#ffe0e0" stroke-linejoin="round"/>
<path d="M55 3.5h6.5M53.5 9l3.5-3.5" stroke="#000" stroke-width="1.1"/>
</svg>
<div class="a" style="left:1124px;top:516px;width:796px;height:386px;border-top:1px solid #a0a0a0;border-left:1px solid #a0a0a0;box-shadow:inset 1px 1px 0 #fff;background:#f0f0f0"></div>
<div class="a" style="left:1917px;top:516px;width:1px;height:26px;background:#a0a0a0"></div>
<div class="a" style="left:1125px;top:540px;width:793px;height:1px;background:#fff"></div>
<div class="a" style="left:1125px;top:541px;width:793px;height:1px;background:#a0a0a0"></div>
<div class="a" style="left:1127px;top:519px;width:78px;height:21px;border-top:1px solid #a0a0a0;border-left:1px solid #a0a0a0;border-bottom:1px solid #fff;border-right:1px solid #fff;box-shadow:inset 1px 1px 0 #fff,inset -1px -1px 0 #a0a0a0;background:#f0f0f0"></div>
<div class="a" style="left:1207px;top:519px;width:641px;height:21px;border-top:1px solid #a0a0a0;border-left:1px solid #a0a0a0;border-bottom:1px solid #fff;border-right:1px solid #fff;box-shadow:inset 1px 1px 0 #fff;background:#f0f0f0"></div>
<div class="a" style="left:1850px;top:519px;width:50px;height:21px;border-top:1px solid #a0a0a0;border-left:1px solid #a0a0a0;border-bottom:1px solid #fff;border-right:1px solid #fff;box-shadow:inset 1px 1px 0 #fff;background:#f0f0f0"></div>
<div class="a" style="left:1902px;top:519px;width:14px;height:21px;border-top:1px solid #a0a0a0;border-left:1px solid #a0a0a0;border-bottom:1px solid #fff;border-right:1px solid #fff;box-shadow:inset 1px 1px 0 #fff;background:#f0f0f0"></div>
<svg class="a" style="left:1852px;top:522px" width="64" height="16" viewBox="0 0 64 16">
<defs><radialGradient id="lg1850519" cx="0.4" cy="0.4" r="0.6"><stop offset="0" stop-color="#fafafa"/><stop offset="1" stop-color="#c8c8c8"/></radialGradient>
<linearGradient id="rb1850519" x1="0" y1="0" x2="1" y2="1"><stop offset="0" stop-color="#ff4a4a"/><stop offset="1" stop-color="#c00000"/></linearGradient></defs>
<circle cx="6" cy="6" r="4.6" fill="url(#lg1850519)" stroke="#333" stroke-width="1.2"/><path d="M9.2 9.2l3.3 3.3" stroke="#111" stroke-width="2.2"/>
<g fill="#e8e8e8" stroke="#6a6a6a" stroke-width="0.8"><rect x="19.5" y="2.5" width="2.4" height="7" rx="1.2"/><rect x="22" y="1.5" width="2.4" height="8" rx="1.2"/><rect x="24.5" y="2" width="2.4" height="8" rx="1.2"/><rect x="27" y="3.5" width="2.2" height="6.5" rx="1.1"/><path d="M17.5 7.5c1-1 2 0 2.5 1V6h9.2v3.5c0 2-1 4-3 4h-4.5c-1.5-1-3-3-4.2-6z"/></g><path d="M20.5 8h8" stroke="#e8e8e8" stroke-width="1.5"/>
<path d="M34 5V2h3M44 2h3v3M34 10v3h3M44 13h3v-3" fill="none" stroke="#000" stroke-width="1.4"/>
<rect x="39" y="7" width="6" height="5" fill="#ddd"/><path d="M35.5 7c0.5-2.5 4-3.5 6-2l2.5 2.5-2.5 0.5v2.5c-1 1.5-3.5 1.5-5 0.5z" fill="#555"/><circle cx="37.5" cy="7.5" r="1" fill="#999"/>
<rect x="52" y="2" width="11.5" height="10.5" rx="1.2" fill="url(#rb1850519)"/><rect x="53" y="12" width="10" height="1.2" fill="#7a0000"/>
<path d="M54.5 10.5L59.5 5.5M57.5 4.5h4.5v4.5z" stroke="#ffe0e0" stroke-width="2" fill="#ffe0e0" stroke-linejoin="round"/>
<path d="M55 3.5h6.5M53.5 9l3.5-3.5" stroke="#000" stroke-width="1.1"/>
</svg>
<div class="a" style="left:408px;top:190px;width:711px;height:321px;background:#fff;overflow:hidden"><svg class="a" style="left:0;top:0" width="711" height="321" viewBox="408 190 711 321">
<defs><pattern id="wmesh" width="6.6" height="6.3" patternUnits="userSpaceOnUse" patternTransform="translate(751 265) skewX(-12)"><rect width="1.8" height="6.3" fill="#000"/><rect width="6.6" height="1.9" fill="#000"/></pattern>
<linearGradient id="lay" x1="0" y1="0" x2="0" y2="1"><stop offset="0" stop-color="#008000"/><stop offset="1" stop-color="#000"/></linearGradient>
<linearGradient id="laz" x1="0" y1="0" x2="1" y2="0"><stop offset="0" stop-color="#000"/><stop offset="1" stop-color="#0000ff"/></linearGradient>
</defs>
<g shape-rendering="crispEdges"><rect x="797" y="190" width="1" height="321" fill="#a0a0a0"/><rect x="408" y="413" width="711" height="1" fill="#a0a0a0"/></g>
<!-- cage mesh -->
<path d="M751 264L828 263L836 342L742 344z" fill="url(#wmesh)"/>
<!-- roof bar -->
<path d="M750 254h9v3l-2.5 3h-4l-2.5-3z" fill="#000"/>
<path d="M755 259.5h75l-1.5 6h-74z" fill="#000"/>
<!-- cage posts -->
<path d="M749 262l6 0-9 48-4 38h-7l4-40z" fill="#000"/>
<path d="M827 263l4 0 5 62-4 0z" fill="#000"/>
<path d="M790 264l3 0-2 62-3 0z" fill="#000"/>
<path d="M820 266l12 0-4 14z" fill="none" stroke="#000" stroke-width="1.5"/>
<path d="M830 306h8l8 22h-6l-6-18h-4z" fill="#000"/>
<!-- lower cab -->
<path d="M742 330L770 329L800 334L838 329L842 346L742 346z" fill="#000"/>
<path d="M762 333h5M770 334h4M778 336h8M806 336h6M816 334h10M752 338h6M790 340h4" stroke="#fff" stroke-width="1.6"/>
<path d="M800 318L812 322L830 328L842 334L838 344L810 342L796 336z" fill="#000"/>
<path d="M766 312l10 4M776 320l12 2M752 318l6 6" stroke="#000" stroke-width="2.5"/>
<path d="M742 342L838 340L848 334L860 340L876 356L880 372L850 372L840 358L718 358L716 345L738 340z" fill="#000"/>
<path d="M752 353.5h36M792 353.5h48" stroke="#fff" stroke-width="1.4"/>
<path d="M724 351h10M770 347h6M806 346h8M820 348l6-3M830 347h8" stroke="#fff" stroke-width="1" stroke-dasharray="2 1"/>
<path d="M746 322v14M742 330h4" stroke="#fff" stroke-width="1.6"/>
<!-- rear fender/engine -->
<path d="M842 328L858 331L876 355L880 366L880 408L872 410L866 380L850 362L836 352z" fill="#000"/>
<path d="M848 333h10M846 338l12 2M850 344l10 4M856 350l6 4M852 358l10 2" stroke="#fff" stroke-width="1.3"/>
<path d="M864 352L874 360L872 372zM860 360L868 374L864 380zM866 342L872 350L866 350z" fill="#fff"/>
<path d="M862 356L876 366M858 364L872 384M870 352L860 378" stroke="#000" stroke-width="1"/>
<path d="M882 384v20" stroke="#fff" stroke-width="1"/>
<rect x="880" y="380" width="4" height="29" fill="#000"/>
<path d="M880 366L882 378" stroke="#000" stroke-width="2"/>
<!-- lower chassis between wheels -->
<path d="M719 358h62v5h-62zM730 386h76v5h-76zM720 395h86v3h-86z" fill="#000"/>
<path d="M782 358v38M800 358v38M780 365l28 20M808 365l-28 20M740 372l40-10M712 392l26 -18" stroke="#000" stroke-width="1.6"/>
<!-- loader arm & attacher -->
<pattern id="specks" width="5" height="6" patternUnits="userSpaceOnUse"><rect width="5" height="6" fill="#000"/><rect x="1" y="1" width="1" height="1.2" fill="#fff"/><rect x="3.5" y="4" width="1" height="1" fill="#fff"/></pattern>
<path d="M689 306L696 300L741 307L740 311L697 305L692 309z" fill="#000"/>
<path d="M694 308L740 315M696 312L738 322M698 318L736 330M704 326L736 342M710 332L722 346" stroke="#000" stroke-width="1.8"/>
<path d="M692 318L704 346L716 392M696 318L712 350L720 390M700 322L716 352M704 326L724 356M690 330L700 392M693 342L706 394M698 350L710 394M708 350L722 380" stroke="#000" stroke-width="1.1"/>
<path d="M690 349H718M686 386L720 362M690 390L738 397M688 376L735 396" stroke="#000" stroke-width="1.3"/>
<path d="M730 356L736 346L744 340L738 360L726 392" stroke="#000" stroke-width="2.5" fill="none"/>
<!-- attacher plate (left) -->
<path d="M689 306L691 318L689 350L687 392L680 393L673 386L672 370L673 340L675 324L679 318L678 312L682 310z" fill="url(#specks)"/>
<path d="M689 306L691 318L689 350L687 392M680 393L673 386L672 370L673 340L675 324" stroke="#000" stroke-width="2" fill="none"/>
<path d="M676 376l8 8M674 378l4 10" stroke="#fff" stroke-width="0.8"/>
<!-- wheels -->
<circle cx="751" cy="394" r="32" fill="#000"/><circle cx="751" cy="394" r="26.5" fill="none" stroke="#fff" stroke-width="1.3" stroke-dasharray="1.6 1.8"/><circle cx="751" cy="394" r="23.5" fill="none" stroke="#fff" stroke-width="1.2" stroke-dasharray="1.4 2"/><circle cx="751" cy="394" r="20.5" fill="none" stroke="#fff" stroke-width="1.2" stroke-dasharray="1.6 1.6"/><circle cx="751" cy="394" r="17.5" fill="none" stroke="#fff" stroke-width="1.1" stroke-dasharray="1.2 2.4"/><path d="M742 392h4M748 392h6M756 392h3M745 383h8M741 401l5-3 4 4 5-5 4 3M743 388l5-3 3 3 4-1M755 388l4 3M746 395h3M753 395h5" stroke="#fff" stroke-width="1.2" fill="none"/>
<circle cx="837" cy="394.5" r="32" fill="#000"/><circle cx="837" cy="394.5" r="26.5" fill="none" stroke="#fff" stroke-width="1.3" stroke-dasharray="1.6 1.8"/><circle cx="837" cy="394.5" r="23.5" fill="none" stroke="#fff" stroke-width="1.2" stroke-dasharray="1.4 2"/><circle cx="837" cy="394.5" r="20.5" fill="none" stroke="#fff" stroke-width="1.2" stroke-dasharray="1.6 1.6"/><circle cx="837" cy="394.5" r="17.5" fill="none" stroke="#fff" stroke-width="1.1" stroke-dasharray="1.2 2.4"/><path d="M828 392.5h4M834 392.5h6M842 392.5h3M831 383.5h8M827 401.5l5-3 4 4 5-5 4 3M829 388.5l5-3 3 3 4-1M841 388.5l4 3M832 395.5h3M839 395.5h5" stroke="#fff" stroke-width="1.2" fill="none"/>
<!-- origin gizmo -->
<rect x="793" y="408" width="10" height="10" fill="#9b4f92" fill-opacity="0.55"/>
<path d="M788 404L807 423M807 404L788 423" stroke="#9b4f92" stroke-opacity="0.7"/>
<rect x="797" y="389" width="1" height="24" fill="url(#lay)"/>
<rect x="797" y="413" width="25" height="1" fill="url(#laz)"/>
<!-- axis indicator -->
<rect x="418" y="461" width="1" height="40" fill="url(#lay)"/>
<rect x="418" y="500" width="40" height="1" fill="url(#laz)"/>
<path d="M416 499.5l5 5.5M421 499.5l-5 5.5" stroke="#f00" stroke-width="1.6"/>
<path d="M415.5 450l2.5 5 2.5-5M420.5 450l-3 7h-2" stroke="#008000" stroke-width="1.4" fill="none"/>
<path d="M466 499.5h5l-5 5h5" stroke="#0000ff" stroke-width="1.4" fill="none"/>
</svg></div>
<div class="a" style="left:1125px;top:190px;width:795px;height:321px;background:#fff;overflow:hidden"><svg class="a" style="left:0;top:0" width="795" height="321" viewBox="1125 190 795 321" shape-rendering="crispEdges">
<path d="M1131.5 190v321 M1141.5 190v321 M1151.5 190v321 M1161.5 190v321 M1171.5 190v321 M1181.5 190v321 M1191.5 190v321 M1201.5 190v321 M1211.5 190v321 M1231.5 190v321 M1241.5 190v321 M1251.5 190v321 M1261.5 190v321 M1271.5 190v321 M1281.5 190v321 M1291.5 190v321 M1301.5 190v321 M1311.5 190v321 M1331.5 190v321 M1341.5 190v321 M1351.5 190v321 M1361.5 190v321 M1371.5 190v321 M1381.5 190v321 M1391.5 190v321 M1401.5 190v321 M1411.5 190v321 M1431.5 190v321 M1441.5 190v321 M1451.5 190v321 M1461.5 190v321 M1471.5 190v321 M1481.5 190v321 M1491.5 190v321 M1501.5 190v321 M1511.5 190v321 M1531.5 190v321 M1541.5 190v321 M1551.5 190v321 M1561.5 190v321 M1571.5 190v321 M1581.5 190v321 M1591.5 190v321 M1601.5 190v321 M1611.5 190v321 M1631.5 190v321 M1641.5 190v321 M1651.5 190v321 M1661.5 190v321 M1671.5 190v321 M1681.5 190v321 M1691.5 190v321 M1701.5 190v321 M1711.5 190v321 M1731.5 190v321 M1741.5 190v321 M1751.5 190v321 M1761.5 190v321 M1771.5 190v321 M1781.5 190v321 M1791.5 190v321 M1801.5 190v321 M1811.5 190v321 M1831.5 190v321 M1841.5 190v321 M1851.5 190v321 M1861.5 190v321 M1871.5 190v321 M1881.5 190v321 M1891.5 190v321 M1901.5 190v321 M1911.5 190v321 M1125 200.5h795 M1125 210.5h795 M1125 220.5h795 M1125 230.5h795 M1125 240.5h795 M1125 260.5h795 M1125 270.5h795 M1125 280.5h795 M1125 290.5h795 M1125 300.5h795 M1125 310.5h795 M1125 320.5h795 M1125 330.5h795 M1125 340.5h795 M1125 360.5h795 M1125 370.5h795 M1125 380.5h795 M1125 390.5h795 M1125 400.5h795 M1125 410.5h795 M1125 420.5h795 M1125 430.5h795 M1125 440.5h795 M1125 460.5h795 M1125 470.5h795 M1125 480.5h795 M1125 490.5h795 M1125 500.5h795 M1125 510.5h795" stroke="#efefef" stroke-width="1"/>
<path d="M1221.5 190v321 M1321.5 190v321 M1421.5 190v321 M1621.5 190v321 M1721.5 190v321 M1821.5 190v321 M1125 250.5h795 M1125 450.5h795" stroke="#dedede" stroke-width="1"/>
<path d="M1521.5 190v321M1125 350.5h795" stroke="#a4a4a4" stroke-width="1"/>
<g shape-rendering="auto"><defs><linearGradient id="gx350" x1="0" y1="0" x2="1" y2="0"><stop offset="0" stop-color="#ff0000"/><stop offset="1" stop-color="#000"/></linearGradient>
<linearGradient id="gy350" x1="0" y1="0" x2="0" y2="1"><stop offset="0" stop-color="#00c000"/><stop offset="1" stop-color="#000"/></linearGradient></defs>
<rect x="1517" y="345" width="10" height="10" fill="#9b4f92" fill-opacity="0.55"/>
<path d="M1512 340L1531 360M1531 340L1512 360" stroke="#9b4f92" stroke-opacity="0.7" stroke-width="1"/>
<rect x="1497" y="350" width="24" height="1" fill="url(#gx350)"/>
<rect x="1521" y="326" width="1" height="25" fill="url(#gy350)"/><defs><linearGradient id="axb" x1="0" y1="0" x2="1" y2="0"><stop offset="0" stop-color="#ff0000"/><stop offset="1" stop-color="#000"/></linearGradient>
<linearGradient id="ayb" x1="0" y1="0" x2="0" y2="1"><stop offset="0" stop-color="#008000"/><stop offset="1" stop-color="#000"/></linearGradient></defs>
<path d="M1131.5 501.5l4.5 6M1136 501.5l-4.5 6" stroke="#f00" stroke-width="1.8"/>
<rect x="1140" y="502" width="23" height="1" fill="url(#axb)"/>
<rect x="1163" y="479" width="1" height="24" fill="url(#ayb)"/>
<path d="M1160.8 471l2.8 5.5M1166 471l-3.8 7.5h-2" stroke="#008000" stroke-width="1.7" fill="none"/>
<path d="M1161 501.8h5l-5 5.2h5" stroke="#0000ff" stroke-width="1.6" fill="none"/></g>
</svg></div>
<div class="a" style="left:408px;top:542px;width:710px;height:359px;background:#e3e3e3;overflow:hidden"><svg class="a" style="left:0;top:0" width="710" height="359" viewBox="408 542 710 359">
<defs>
 <linearGradient id="armg" x1="0" y1="0" x2="0.3" y2="1"><stop offset="0" stop-color="#9c9c9c"/><stop offset="1" stop-color="#828282"/></linearGradient>
 <linearGradient id="sideg" x1="0" y1="0" x2="1" y2="1"><stop offset="0" stop-color="#a8a8a8"/><stop offset="1" stop-color="#8a8a8a"/></linearGradient>
 <linearGradient id="towg" x1="0" y1="0" x2="1" y2="0"><stop offset="0" stop-color="#8c8c8c"/><stop offset="1" stop-color="#a8a8a8"/></linearGradient>
 <radialGradient id="hubg" cx="0.3" cy="0.35" r="0.75"><stop offset="0" stop-color="#9a1a1a"/><stop offset="0.55" stop-color="#5a0808"/><stop offset="1" stop-color="#080000"/></radialGradient>
 <linearGradient id="smesh" x1="0" y1="0" x2="0" y2="1"><stop offset="0" stop-color="#b4b4b4"/><stop offset="0.6" stop-color="#8a8a8a"/><stop offset="1" stop-color="#3a3a3a"/></linearGradient>
 <pattern id="mesh" width="25" height="30" patternUnits="userSpaceOnUse" patternTransform="translate(345 110) skewX(-12)"><rect width="4.2" height="30" fill="#0a0a0a"/><rect width="25" height="4.2" fill="#0a0a0a"/></pattern><linearGradient id="fmg" x1="0" y1="0" x2="0" y2="1"><stop offset="0" stop-color="#f4f4f4"/><stop offset="0.55" stop-color="#e8e8e8"/><stop offset="0.8" stop-color="#9a9a9a"/><stop offset="1" stop-color="#6a6a6a"/></linearGradient>
 <pattern id="mesh2" width="25" height="30" patternUnits="userSpaceOnUse" patternTransform="translate(555 95) skewX(-10)"><rect width="4.2" height="30" fill="#0a0a0a"/><rect width="25" height="4.2" fill="#0a0a0a"/></pattern>
</defs>
<g transform="translate(540 560) scale(0.30548)">
<!-- shadow under body -->
<path d="M560 700L760 580L775 600L760 690L690 760L560 760z" fill="#141414"/>
<!-- tower right -->
<path d="M940 300L1005 265L1035 290L1035 640L960 655L930 470z" fill="url(#towg)"/>
<!-- arm opening (dark) -->
<path d="M650 500L965 345L930 470L760 540L600 560z" fill="#5e5e5e"/>
<path d="M720 505L940 395L928 445L750 515z" fill="#2a2a2a"/>
<!-- cylinder -->
<path d="M600 545L935 470L945 490L610 575z" fill="#bdbdbd"/>
<path d="M640 505L930 455L932 465L645 520z" fill="#aaaaaa"/>
<!-- cage side mesh -->
<path d="M555 95L790 92L830 310L540 410L520 400z" fill="url(#smesh)"/><path d="M560 180L640 160L660 380L560 400z" fill="#d8d8d8" opacity="0.6"/><path d="M555 95L790 92L830 310L540 410L520 400z" fill="url(#mesh2)"/>
<path d="M600 120l40 0 60 260-30 10z" fill="#121212"/>
<path d="M600 260L760 230L790 330L600 400z" fill="#202020" opacity="0.7"/>
<!-- cab interior bottom -->
<path d="M290 470L470 440L520 400L600 400L620 430L500 480L330 560L290 545z" fill="#2a2a2a"/>
<path d="M430 430l80-20M540 400l60 0M520 420l40-5" stroke="#b41818" stroke-width="10"/>
<!-- front mesh -->
<path d="M345 110L500 92L475 440L290 472z" fill="url(#fmg)"/><path d="M345 110L500 92L475 440L290 472z" fill="url(#mesh)"/>
<!-- roof -->
<path d="M310 68L470 45L805 78L807 100L560 88L500 100L345 115L330 125z" fill="#0c0c0c"/>
<path d="M330 80L345 110L360 130L340 150z" fill="#333"/><path d="M470 60L500 100L520 95z" fill="#333"/>
<!-- posts -->
<path d="M311 70L345 112L295 545L265 540L322 150z" fill="#0c0c0c"/>
<path d="M470 45L565 62L545 100L505 440L468 440L500 100z" fill="#0c0c0c"/>
<path d="M780 82L806 80L832 312L806 318z" fill="#0c0c0c"/>
<!-- safety handle -->
<path d="M270 298L290 296L262 448L244 450z" fill="none" stroke="#0c0c0c" stroke-width="6"/>
<!-- beacon -->
<path d="M778 42c5-6 32-6 37 0l-8 14h-21z" fill="#c2c2c2"/><rect x="793" y="56" width="9" height="32" fill="#9a9a9a"/>
<!-- left side panel -->
<path d="M75 610L85 560L110 490L150 430L250 400L300 410L295 560L270 600L200 640L80 700z" fill="url(#sideg)"/>
<path d="M80 610L92 558L118 492L155 438L250 405L255 418L165 450L125 505L100 565L92 640z" fill="#bcbcbc"/>
<!-- cross bar -->
<path d="M105 595L165 548L315 578L305 650L280 720L110 650z" fill="#b0b0b0"/>
<path d="M165 550L315 578L295 630L155 598z" fill="#161616"/>
<path d="M110 600L280 640L280 720L105 650z" fill="#bababa"/>
<!-- inner left wheel -->
<path d="M150 700c20-30 60-40 90-20l50 60 0 120-60 10c-50-40-80-100-80-170z" fill="#161616"/>
<path d="M215 740c10 20 25 30 50 30" stroke="#c02020" stroke-width="8" fill="none"/>
<path d="M150 690l40-20 30 40-40 20z" fill="#d0d0d0"/>
<!-- front plate -->
<path d="M60 688L150 735L275 800L278 978L75 812z" fill="#a6a6a6"/>
<path d="M60 688L150 735L148 760L70 720z" fill="#c4c4c4"/>
<path d="M120 790L205 835L205 865L125 815z" fill="#141414"/>
<!-- arm band + left front arm -->
<path d="M380 470L1005 265L1035 290L960 350L650 500L600 560L740 560L1035 640L960 655L560 700L450 760L430 880L440 960L330 965L282 900L285 680L310 560z" fill="url(#armg)"/>
<path d="M380 470L310 560L285 680L282 900L300 940L296 690L320 570L390 480z" fill="#b8b8b8"/>
<path d="M380 470L1005 265L1012 272L390 478z" fill="#b4b4b4"/>
<path d="M320 960L345 945L350 700L360 640L400 530L385 530L335 640L325 700L320 900z" fill="#8a8a8a"/>
<path d="M490 515L565 475C575 470 585 485 575 495L505 535C495 540 485 525 490 515z" fill="#acacac" stroke="#555" stroke-width="4"/>
<path d="M460 610L680 580L700 600L470 640z" fill="#a8a8a8"/>
<path d="M640 590L960 500L960 520L650 610z" fill="#9a9a9a"/>
<circle cx="1015" cy="298" r="12" fill="#b4b4b4" stroke="#555" stroke-width="3"/>
<circle cx="940" cy="490" r="12" fill="#b4b4b4" stroke="#555" stroke-width="3"/>
<circle cx="603" cy="540" r="12" fill="#b4b4b4" stroke="#555" stroke-width="3"/>
<circle cx="560" cy="575" r="11" fill="#b4b4b4" stroke="#555" stroke-width="3"/>
<circle cx="450" cy="635" r="10" fill="#b4b4b4" stroke="#555" stroke-width="3"/>
<circle cx="338" cy="945" r="10" fill="#b4b4b4" stroke="#555" stroke-width="3"/>
<!-- rear tire -->
<ellipse cx="875" cy="720" rx="140" ry="155" fill="#161616"/>
<g fill="#161616"><rect x="-5.5" y="-5.5" width="15.4" height="11.0" transform="translate(1013.0 720.0) rotate(0.0)"/><rect x="-5.5" y="-5.5" width="15.4" height="11.0" transform="translate(1010.7 748.1) rotate(11.7)"/><rect x="-5.5" y="-5.5" width="15.4" height="11.0" transform="translate(1003.7 775.3) rotate(23.2)"/><rect x="-5.5" y="-5.5" width="15.4" height="11.0" transform="translate(992.3 800.5) rotate(34.5)"/><rect x="-5.5" y="-5.5" width="15.4" height="11.0" transform="translate(977.0 823.1) rotate(45.3)"/><rect x="-5.5" y="-5.5" width="15.4" height="11.0" transform="translate(958.2 842.1) rotate(55.7)"/><rect x="-5.5" y="-5.5" width="15.4" height="11.0" transform="translate(936.5 857.0) rotate(65.8)"/><rect x="-5.5" y="-5.5" width="15.4" height="11.0" transform="translate(912.8 867.2) rotate(75.6)"/><rect x="-5.5" y="-5.5" width="15.4" height="11.0" transform="translate(887.7 872.3) rotate(85.2)"/><rect x="-5.5" y="-5.5" width="15.4" height="11.0" transform="translate(862.3 872.3) rotate(94.8)"/><rect x="-5.5" y="-5.5" width="15.4" height="11.0" transform="translate(837.2 867.2) rotate(104.4)"/><rect x="-5.5" y="-5.5" width="15.4" height="11.0" transform="translate(813.5 857.0) rotate(114.2)"/><rect x="-5.5" y="-5.5" width="15.4" height="11.0" transform="translate(791.8 842.1) rotate(124.3)"/><rect x="-5.5" y="-5.5" width="15.4" height="11.0" transform="translate(773.0 823.1) rotate(134.7)"/><rect x="-5.5" y="-5.5" width="15.4" height="11.0" transform="translate(757.7 800.5) rotate(145.5)"/><rect x="-5.5" y="-5.5" width="15.4" height="11.0" transform="translate(746.3 775.3) rotate(156.8)"/><rect x="-5.5" y="-5.5" width="15.4" height="11.0" transform="translate(739.3 748.1) rotate(168.3)"/><rect x="-5.5" y="-5.5" width="15.4" height="11.0" transform="translate(737.0 720.0) rotate(180.0)"/><rect x="-5.5" y="-5.5" width="15.4" height="11.0" transform="translate(739.3 691.9) rotate(-168.3)"/><rect x="-5.5" y="-5.5" width="15.4" height="11.0" transform="translate(746.3 664.7) rotate(-156.8)"/><rect x="-5.5" y="-5.5" width="15.4" height="11.0" transform="translate(757.7 639.5) rotate(-145.5)"/><rect x="-5.5" y="-5.5" width="15.4" height="11.0" transform="translate(773.0 616.9) rotate(-134.7)"/><rect x="-5.5" y="-5.5" width="15.4" height="11.0" transform="translate(791.8 597.9) rotate(-124.3)"/><rect x="-5.5" y="-5.5" width="15.4" height="11.0" transform="translate(813.5 583.0) rotate(-114.2)"/><rect x="-5.5" y="-5.5" width="15.4" height="11.0" transform="translate(837.2 572.8) rotate(-104.4)"/><rect x="-5.5" y="-5.5" width="15.4" height="11.0" transform="translate(862.3 567.7) rotate(-94.8)"/><rect x="-5.5" y="-5.5" width="15.4" height="11.0" transform="translate(887.7 567.7) rotate(-85.2)"/><rect x="-5.5" y="-5.5" width="15.4" height="11.0" transform="translate(912.8 572.8) rotate(-75.6)"/><rect x="-5.5" y="-5.5" width="15.4" height="11.0" transform="translate(936.5 583.0) rotate(-65.8)"/><rect x="-5.5" y="-5.5" width="15.4" height="11.0" transform="translate(958.2 597.9) rotate(-55.7)"/><rect x="-5.5" y="-5.5" width="15.4" height="11.0" transform="translate(977.0 616.9) rotate(-45.3)"/><rect x="-5.5" y="-5.5" width="15.4" height="11.0" transform="translate(992.3 639.5) rotate(-34.5)"/><rect x="-5.5" y="-5.5" width="15.4" height="11.0" transform="translate(1003.7 664.7) rotate(-23.2)"/><rect x="-5.5" y="-5.5" width="15.4" height="11.0" transform="translate(1010.7 691.9) rotate(-11.7)"/></g>
<path d="M770 650l40 20M760 700l45 15M765 750l45 10M785 800l40 0M800 600l35 28M840 580l20 32" stroke="#2c2c2c" stroke-width="9" stroke-linecap="round"/>
<ellipse cx="922" cy="735" rx="88" ry="135" fill="#0e0e0e"/>
<ellipse cx="930" cy="732" rx="50" ry="78" fill="url(#hubg)" stroke="#c42222" stroke-width="6"/>
<ellipse cx="945" cy="732" rx="34" ry="62" fill="none" stroke="#9a1616" stroke-width="4"/>
<circle cx="905" cy="705" r="5" fill="#777"/><circle cx="902" cy="735" r="5" fill="#777"/>
<!-- front tire -->
<ellipse cx="537" cy="843" rx="180" ry="190" fill="#161616"/>
<g fill="#161616"><rect x="-6.0" y="-6.0" width="16.8" height="12.0" transform="translate(715.0 843.0) rotate(0.0)"/><rect x="-6.0" y="-6.0" width="16.8" height="12.0" transform="translate(712.8 872.4) rotate(9.5)"/><rect x="-6.0" y="-6.0" width="16.8" height="12.0" transform="translate(706.3 901.1) rotate(18.9)"/><rect x="-6.0" y="-6.0" width="16.8" height="12.0" transform="translate(695.6 928.4) rotate(28.3)"/><rect x="-6.0" y="-6.0" width="16.8" height="12.0" transform="translate(681.0 953.5) rotate(37.5)"/><rect x="-6.0" y="-6.0" width="16.8" height="12.0" transform="translate(662.9 975.9) rotate(46.6)"/><rect x="-6.0" y="-6.0" width="16.8" height="12.0" transform="translate(641.6 995.1) rotate(55.5)"/><rect x="-6.0" y="-6.0" width="16.8" height="12.0" transform="translate(617.8 1010.5) rotate(64.2)"/><rect x="-6.0" y="-6.0" width="16.8" height="12.0" transform="translate(592.0 1021.8) rotate(72.9)"/><rect x="-6.0" y="-6.0" width="16.8" height="12.0" transform="translate(564.8 1028.7) rotate(81.5)"/><rect x="-6.0" y="-6.0" width="16.8" height="12.0" transform="translate(537.0 1031.0) rotate(90.0)"/><rect x="-6.0" y="-6.0" width="16.8" height="12.0" transform="translate(509.2 1028.7) rotate(98.5)"/><rect x="-6.0" y="-6.0" width="16.8" height="12.0" transform="translate(482.0 1021.8) rotate(107.1)"/><rect x="-6.0" y="-6.0" width="16.8" height="12.0" transform="translate(456.2 1010.5) rotate(115.8)"/><rect x="-6.0" y="-6.0" width="16.8" height="12.0" transform="translate(432.4 995.1) rotate(124.5)"/><rect x="-6.0" y="-6.0" width="16.8" height="12.0" transform="translate(411.1 975.9) rotate(133.4)"/><rect x="-6.0" y="-6.0" width="16.8" height="12.0" transform="translate(393.0 953.5) rotate(142.5)"/><rect x="-6.0" y="-6.0" width="16.8" height="12.0" transform="translate(378.4 928.4) rotate(151.7)"/><rect x="-6.0" y="-6.0" width="16.8" height="12.0" transform="translate(367.7 901.1) rotate(161.1)"/><rect x="-6.0" y="-6.0" width="16.8" height="12.0" transform="translate(361.2 872.4) rotate(170.5)"/><rect x="-6.0" y="-6.0" width="16.8" height="12.0" transform="translate(359.0 843.0) rotate(180.0)"/><rect x="-6.0" y="-6.0" width="16.8" height="12.0" transform="translate(361.2 813.6) rotate(-170.5)"/><rect x="-6.0" y="-6.0" width="16.8" height="12.0" transform="translate(367.7 784.9) rotate(-161.1)"/><rect x="-6.0" y="-6.0" width="16.8" height="12.0" transform="translate(378.4 757.6) rotate(-151.7)"/><rect x="-6.0" y="-6.0" width="16.8" height="12.0" transform="translate(393.0 732.5) rotate(-142.5)"/><rect x="-6.0" y="-6.0" width="16.8" height="12.0" transform="translate(411.1 710.1) rotate(-133.4)"/><rect x="-6.0" y="-6.0" width="16.8" height="12.0" transform="translate(432.4 690.9) rotate(-124.5)"/><rect x="-6.0" y="-6.0" width="16.8" height="12.0" transform="translate(456.2 675.5) rotate(-115.8)"/><rect x="-6.0" y="-6.0" width="16.8" height="12.0" transform="translate(482.0 664.2) rotate(-107.1)"/><rect x="-6.0" y="-6.0" width="16.8" height="12.0" transform="translate(509.2 657.3) rotate(-98.5)"/><rect x="-6.0" y="-6.0" width="16.8" height="12.0" transform="translate(537.0 655.0) rotate(-90.0)"/><rect x="-6.0" y="-6.0" width="16.8" height="12.0" transform="translate(564.8 657.3) rotate(-81.5)"/><rect x="-6.0" y="-6.0" width="16.8" height="12.0" transform="translate(592.0 664.2) rotate(-72.9)"/><rect x="-6.0" y="-6.0" width="16.8" height="12.0" transform="translate(617.8 675.5) rotate(-64.2)"/><rect x="-6.0" y="-6.0" width="16.8" height="12.0" transform="translate(641.6 690.9) rotate(-55.5)"/><rect x="-6.0" y="-6.0" width="16.8" height="12.0" transform="translate(662.9 710.1) rotate(-46.6)"/><rect x="-6.0" y="-6.0" width="16.8" height="12.0" transform="translate(681.0 732.5) rotate(-37.5)"/><rect x="-6.0" y="-6.0" width="16.8" height="12.0" transform="translate(695.6 757.6) rotate(-28.3)"/><rect x="-6.0" y="-6.0" width="16.8" height="12.0" transform="translate(706.3 784.9) rotate(-18.9)"/><rect x="-6.0" y="-6.0" width="16.8" height="12.0" transform="translate(712.8 813.6) rotate(-9.5)"/></g>
<path d="M380 760l50 25M372 820l55 15M380 880l55 8M400 940l50-5M430 990l40-10M410 710l45 35M450 680l35 40M500 660l25 40" stroke="#2c2c2c" stroke-width="10" stroke-linecap="round"/>
<ellipse cx="595" cy="855" rx="125" ry="155" fill="#0e0e0e"/>
<ellipse cx="600" cy="857" rx="80" ry="98" fill="url(#hubg)" stroke="#c82424" stroke-width="7"/>
<ellipse cx="620" cy="855" rx="58" ry="82" fill="none" stroke="#9a1616" stroke-width="5"/>
<ellipse cx="565" cy="835" rx="25" ry="35" fill="#140202"/>
<g fill="#808080"><circle cx="583" cy="798" r="6"/><circle cx="597" cy="825" r="6"/><circle cx="585" cy="858" r="6"/><circle cx="558" cy="880" r="6"/><circle cx="540" cy="858" r="6"/></g>
</g>
<defs><linearGradient id="a3y" x1="0" y1="0" x2="0" y2="1"><stop offset="0" stop-color="#008000"/><stop offset="1" stop-color="#000"/></linearGradient></defs>
<rect x="435" y="869" width="1" height="21" fill="url(#a3y)"/>
<path d="M421 886.5L428 887.5L433 888.5L435.5 889.5" stroke="#777" stroke-width="1" fill="none"/>
<path d="M421 892.5L428 891.5L433 890.5L435.5 889.5" stroke="#000080" stroke-width="1" fill="none"/>
<path d="M415 884.5l4 5M419 884.5l-4 5" stroke="#f00" stroke-width="1.4"/>
<path d="M432.5 862.5l2.5 4.5 3-4.5M435.5 866.5l-2 3.5h-1.5" stroke="#008000" stroke-width="1.5" fill="none"/>
<path d="M414 892.8h5l-5 4.5h5" stroke="#0000ff" stroke-width="1.5" fill="none"/>
</svg></div>
<div class="a" style="left:1125px;top:542px;width:793px;height:359px;background:#e3e3e3;overflow:hidden"><svg class="a" style="left:0;top:0" width="793" height="359" viewBox="1125 542 793 359">
<defs><linearGradient id="redg" x1="0" y1="0" x2="0" y2="1"><stop offset="0" stop-color="#8a1a1e"/><stop offset="1" stop-color="#4a0a0c"/></linearGradient></defs>
<path d="M1125 542H1918V810L1912 810L1887 820L1853 808L1853 783L1837 783L1824 795L1802 781L1805 770L1803 756L1785 762L1772 750L1778 737L1772 718L1760 727L1751 708L1757 695L1743 687L1740 670L1749 662L1742 655L1745 643L1736 635L1691 643L1645 645L1353 645L1310 636L1297 641L1294 657L1304 666L1300 687L1290 682L1285 696L1293 708L1285 729L1274 721L1265 732L1272 747L1260 765L1243 755L1238 761L1242 782L1221 796L1206 784L1192 790L1192 809L1154 821L1136 814L1125 815z" fill="#000"/>
<path d="M1125 560L1160 575L1200 592L1250 600L1140 600L1125 610z" fill="#141414"/>
<path d="M1918 570L1880 585L1850 595L1918 592z" fill="#141414"/>
<path d="M1165 603L1230 602L1268 613L1270 622L1258 660L1240 675L1200 683L1175 667L1137 656L1152 630z" fill="url(#redg)"/>
<path d="M1165 603L1230 602M1152 630L1265 615M1140 655L1255 640M1175 667L1258 660M1230 602L1240 675M1252 610L1215 680M1205 605L1180 665M1268 622L1195 682M1150 640l100-8" stroke="#000" stroke-width="0.8" fill="none"/>
<path d="M1776 604L1878 603L1905 652L1882 677L1820 681L1793 668L1774 614z" fill="url(#redg)"/>
<path d="M1776 604L1878 603M1780 625L1895 630M1790 650L1900 655M1793 668L1882 677M1800 604L1825 680M1830 604L1800 670M1860 605L1850 680M1885 620L1830 680" stroke="#000" stroke-width="0.8" fill="none"/>
<path d="M1140 808l10-50M1160 810l5-40M1900 808l-8-40" stroke="#1a1a1a" stroke-width="2"/>
<defs><linearGradient id="gx721" x1="0" y1="0" x2="1" y2="0"><stop offset="0" stop-color="#ff0000"/><stop offset="1" stop-color="#000"/></linearGradient>
<linearGradient id="gy721" x1="0" y1="0" x2="0" y2="1"><stop offset="0" stop-color="#00c000"/><stop offset="1" stop-color="#000"/></linearGradient></defs>
<rect x="1517" y="716" width="10" height="10" fill="#9b4f92" fill-opacity="0.55"/>
<path d="M1512 711L1531 731M1531 711L1512 731" stroke="#9b4f92" stroke-opacity="0.7" stroke-width="1"/>
<rect x="1497" y="721" width="24" height="1" fill="url(#gx721)"/>
<rect x="1521" y="697" width="1" height="25" fill="url(#gy721)"/>
<defs><linearGradient id="axp" x1="0" y1="0" x2="1" y2="0"><stop offset="0" stop-color="#ff0000"/><stop offset="1" stop-color="#000"/></linearGradient>
<linearGradient id="ayp" x1="0" y1="0" x2="0" y2="1"><stop offset="0" stop-color="#008000"/><stop offset="1" stop-color="#000"/></linearGradient></defs>
<path d="M1131.5 892.5l4.5 6M1136 892.5l-4.5 6" stroke="#f00" stroke-width="1.8"/>
<rect x="1140" y="893" width="23" height="1" fill="url(#axp)"/>
<rect x="1163" y="870" width="1" height="24" fill="url(#ayp)"/>
<path d="M1160.8 862l2.8 5.5M1166 862l-3.8 7.5h-2" stroke="#008000" stroke-width="1.7" fill="none"/>
<path d="M1161 892.8h5l-5 5.2h5" stroke="#0000ff" stroke-width="1.6" fill="none"/>
</svg></div>
<div class="a" style="left:1125px;top:901px;width:795px;height:1px;background:#fff"></div>
<!-- log panel -->
<div class="hl g" style="left:406px;top:906px;width:1514px"></div>
<div class="hl w" style="left:406px;top:907px;width:1514px"></div>
<svg class="a" style="left:407px;top:908px" width="13" height="12" viewBox="0 0 13 12"><rect x="0" y="0" width="12" height="11" rx="1" fill="url(#rg)"/><rect x="0" y="10" width="12" height="1" fill="#8a0000"/><path d="M2 1.8l8 7.4M10 1.8l-8 7.4" stroke="#000" stroke-width="1.5"/><path d="M3.6 3.2l5.6 5.2M9.2 3.2l-5.6 5.2" stroke="#fff" stroke-width="1.9"/></svg>
<div class="vl" style="left:411px;top:922px;height:94px;background:#a0a0a0;box-shadow:1px 0 0 #fff"></div>
<div class="vl" style="left:415px;top:922px;height:94px;background:#a0a0a0;box-shadow:1px 0 0 #fff"></div>
<div class="a" style="left:421px;top:909px;width:1497px;height:108px;background:#fff;border-top:1px solid #696969;border-left:1px solid #696969;border-right:1px solid #e3e3e3;border-bottom:1px solid #e3e3e3;box-shadow:inset 1px 1px 0 #a0a0a0"></div>
<svg class="a" style="left:432px;top:910px" width="30" height="16" viewBox="432 910 30 16">
 <g fill="#777"><rect x="433" y="920" width="1" height="1"/><rect x="435" y="920" width="1" height="1"/><rect x="437" y="920" width="1" height="1"/><rect x="439" y="920" width="1" height="1"/><rect x="441" y="920" width="1" height="1"/><rect x="443" y="920" width="1" height="1"/></g>
 <path d="M448.5 912.5h4l3.5 3.5v4l-3.5 3.5h-4l-3.5-3.5v-4z" fill="#c8c8c8" transform="translate(1 1)"/>
 <path d="M448.5 911.5h4l4 4v4.5l-4 3.5h-4l-4-3.5v-4.5z" fill="#fff" stroke="#000080" stroke-width="1.2"/>
 <rect x="449.5" y="913" width="2" height="1.3" fill="#0000ff"/><rect x="449.5" y="915.5" width="2" height="5.5" fill="#0000ff"/>
</svg>
<!-- status bar -->
<div class="a" style="left:1568px;top:1023px;width:104px;height:16px;background:#c4c4dc;border-top:1px solid #fff;border-left:1px solid #fff;border-bottom:1px solid #a0a0a0;border-right:1px solid #a0a0a0"></div>
<div class="a" style="left:1675px;top:1023px;width:36px;height:16px;border-top:1px solid #fff;border-left:1px solid #fff;border-bottom:1px solid #a0a0a0;border-right:1px solid #a0a0a0"></div>
<div class="a" style="left:1714px;top:1023px;width:190px;height:16px;border-top:1px solid #a0a0a0;border-left:1px solid #a0a0a0;border-bottom:1px solid #fff;border-right:1px solid #fff;overflow:hidden"></div>
<div class="a" style="left:4px;top:1023px;width:2px;height:16px;border-left:1px solid #a0a0a0;border-top:1px solid #a0a0a0"></div>
<svg class="a" style="left:1905px;top:1025px" width="14" height="14"><g fill="#a0a0a0"><rect x="9" y="1" width="2" height="2"/><rect x="5" y="5" width="2" height="2"/><rect x="9" y="5" width="2" height="2"/><rect x="1" y="9" width="2" height="2"/><rect x="5" y="9" width="2" height="2"/><rect x="9" y="9" width="2" height="2"/></g></svg>
<!-- taskbar -->
<div class="a" style="left:0;top:1040px;width:1920px;height:40px;background:linear-gradient(100deg,#1f4a2f 0%,#1d482d 50%,#1e4a2e 100%)"></div>
<svg class="a" style="left:0;top:1040px" width="1920" height="40" viewBox="0 1040 1920 40">
 <defs>
  <linearGradient id="chr" x1="0" y1="0" x2="0" y2="1"><stop offset="0" stop-color="#e0493a"/><stop offset="1" stop-color="#c8352a"/></linearGradient>
  <linearGradient id="fold" x1="0" y1="0" x2="0" y2="1"><stop offset="0" stop-color="#fbe7a6"/><stop offset="1" stop-color="#e9c461"/></linearGradient>
  <linearGradient id="stm" x1="0" y1="0" x2="0" y2="1"><stop offset="0" stop-color="#1b2f5a"/><stop offset="1" stop-color="#1670b8"/></linearGradient>
  <linearGradient id="arma" x1="0" y1="0" x2="0" y2="1"><stop offset="0" stop-color="#cfcfcf"/><stop offset="0.45" stop-color="#222"/><stop offset="1" stop-color="#000"/></linearGradient>
  <linearGradient id="sky" x1="0" y1="0" x2="0" y2="1"><stop offset="0" stop-color="#bfe3f7"/><stop offset="0.5" stop-color="#5aa0c8"/><stop offset="1" stop-color="#2f6f9a"/></linearGradient>
 </defs>
 <!-- button backgrounds -->
 <g fill="#ffffff" fill-opacity="0.18" stroke="#ffffff" stroke-opacity="0.35">
  <rect x="52.5" y="1041.5" width="57" height="37"/>
  <rect x="114.5" y="1041.5" width="57" height="37"/>
  <rect x="672.5" y="1041.5" width="52" height="37"/>
  <rect x="726.5" y="1041.5" width="3" height="37"/>
  <rect x="734.5" y="1041.5" width="57" height="37"/>
 </g>
 <rect x="796.5" y="1041.5" width="57" height="37" fill="#ffffff" fill-opacity="0.33" stroke="#ffffff" stroke-opacity="0.7"/>
 <!-- windows logo -->
 <path d="M12 1049.5l11-1.5v11.5h-11zM24.5 1047.8l13.5-1.8v13.5h-13.5zM12 1061h11v11.5l-11-1.5zM24.5 1061h13.5v13.5l-13.5-1.8z" fill="#fff"/>
 <!-- chrome -->
 <circle cx="81" cy="1060" r="15" fill="#1da362"/>
 <path d="M81 1060L68 1052.5A15 15 0 0 1 94 1052.5z" fill="#dd4b39"/>
 <path d="M81 1060L94 1052.5A15 15 0 0 1 80 1075z" fill="#fcc934"/>
 <circle cx="81" cy="1060" r="6.5" fill="#fff"/><circle cx="81" cy="1060" r="5.3" fill="#4285f4"/>
 <!-- explorer -->
 <path d="M127 1052h8l2 -1.5h7l1.5 1.5h11v19h-29.5z" fill="url(#fold)" stroke="#c9a24a" stroke-width="0.8"/>
 <rect x="132" y="1052" width="3" height="2" fill="#2bd02b"/><rect x="139" y="1054" width="3" height="2" fill="#e03020"/><rect x="148" y="1056" width="3" height="2" fill="#2a8ae0"/>
 <path d="M131 1075v-9h23v9h-4v-6h-15v6z" fill="#7cc7ee" stroke="#3a8fc8" stroke-width="0.8"/>
 <!-- IV -->
 <path d="M188.5 1049.5h11v3h-2v14h2v3.5h-11v-3.5h2v-14h-2zM200.5 1049.5h20.5v3h-2l-5 17.5h-6.5l-5-17.5h-2z" fill="#111" stroke="#fff" stroke-width="1.3"/>
 <!-- V -->
 <path d="M252 1048h11l-2 2 5 15 6-15-2-2h11l-3 2-10 22h-5l-9-22z" fill="#2f7d2a" stroke="#d8d8d8" stroke-width="1.1"/>
 <!-- arma -->
 <rect x="313" y="1044" width="32" height="32" rx="5" fill="url(#arma)"/>
 <text x="329" y="1063" font-family="Liberation Sans" font-weight="bold" font-size="10" fill="#fff" text-anchor="middle" letter-spacing="-0.6">ARMA</text>
 <path d="M331 1066v8l8-4z" fill="#bbb"/>
 <!-- fallout -->
 <circle cx="391" cy="1060" r="16" fill="#3b8fe0"/>
 <path d="M378 1070l24-20 3 4-24 20z" fill="#f1d23a" opacity="0.85"/>
 <circle cx="390" cy="1061" r="8.5" fill="#f5dfb0" stroke="#5a3a20" stroke-width="0.8"/>
 <path d="M382 1056c2-5 9-7 13-3l-2 3c-3-2-7-2-10 1z" fill="#f0c020" stroke="#5a3a20" stroke-width="0.6"/>
 <path d="M386 1065c2 2 5 2 7 0" stroke="#5a3a20" fill="none"/>
 <!-- stripes -->
 <path d="M438 1072l3-15h4l-3 15zM444 1072l3-17h4l-3 17zM451 1072l3-19h4l-3 19zM458 1072l3-21h5l-3 21z" fill="none"/>
 <path d="M438 1072l4-16h4.5l-4 16z" fill="#e8335a"/><path d="M444 1072l4-18h4.5l-4 18z" fill="#31c06a"/><path d="M450.5 1072l4-20h4.5l-4 20z" fill="#f0b428"/><path d="M457 1072l4.5-22h5l-4.5 22z" fill="#2fb6e8"/>
 <path d="M440 1050l26-2v3h-26z" fill="#e8335a" opacity="0"/>
 <!-- paint -->
 <path d="M500 1052l22-5 7 24-22 5z" fill="#fff"/><path d="M503 1055l17-4 5 18-17 4z" fill="#2f8fd0"/>
 <path d="M511 1075l19-28 1.5 1-19 28z" fill="#f0e030" stroke="#333" stroke-width="0.6"/>
 <!-- keyboard monitor -->
 <path d="M568 1046h23v21h-23z" fill="#1f4fd0" stroke="#c8d0e0" stroke-width="1.2"/>
 <path d="M573 1068h12l3 5h-18z" fill="#cfcfcf"/>
 <rect x="561" y="1052" width="23" height="8" rx="1.5" fill="#3aa0f0" stroke="#fff" stroke-width="0.8"/>
 <!-- 2 -->
 <path d="M627 1045h21l-6 17h-21z" fill="#1a3ae0"/><path d="M634 1057h21l-6 18h-21z" fill="#d01010"/>
 <text x="638" y="1075" font-family="Liberation Serif" font-weight="bold" font-style="italic" font-size="27" fill="#fff" text-anchor="middle">2</text>
 <!-- steam -->
 <circle cx="698" cy="1060" r="14.5" fill="url(#stm)"/>
 <circle cx="702.5" cy="1055.5" r="4.5" fill="none" stroke="#fff" stroke-width="2"/>
 <path d="M684 1063l8 3 9-8" stroke="#fff" stroke-width="3" fill="none"/><circle cx="692" cy="1066" r="3" fill="#fff"/><circle cx="692" cy="1066" r="1.5" fill="#1d3c70"/>
 <!-- gallery -->
 <rect x="749" y="1047" width="28" height="24" rx="2" fill="#3a90e0"/>
 <rect x="751.5" y="1049.5" width="23" height="19" fill="url(#sky)" stroke="#fff" stroke-width="1.5"/>
 <path d="M752 1062c5-6 10-5 14-3 3 1 6 1 8 0v8h-22z" fill="#3a7a3a"/>
 <!-- Z -->
 <rect x="809" y="1044" width="32" height="32" fill="#f7a21a"/>
 <path d="M817 1053h16l-13 14h15" fill="none" stroke="#6b3f12" stroke-width="5" opacity="0.8" transform="translate(2 2)"/>
 <path d="M815 1051h17l-14 15h16" fill="none" stroke="#3d2390" stroke-width="4.5"/>
 <!-- tray -->
 <path d="M1797.5 1063.5l4-4 4 4z" fill="#fff"/>
 <rect x="1818" y="1054" width="15" height="14" rx="2" fill="#1c7fd0"/><path d="M1821 1057v9M1824 1060v6M1827 1057v9M1830 1061v5" stroke="#fff" stroke-width="1.5"/>
</svg>
<div class="t" style="left:838px;top:5.15px;font-size:14px;letter-spacing:0.281px;color:#2b2b2b;">s160 - ZModeler ver 2.2.4 (Build 981)</div>
<div class="t" style="left:8px;top:26.84px;font-size:12px;letter-spacing:-1.281px;">File</div>
<div class="t" style="left:41.5px;top:26.84px;font-size:12px;letter-spacing:-1.099px;">View</div>
<div class="t" style="left:82.5px;top:26.84px;font-size:12px;letter-spacing:-0.893px;">Options</div>
<div class="t" style="left:137px;top:26.84px;font-size:12px;letter-spacing:-1.062px;">Edit</div>
<div class="t" style="left:173px;top:26.84px;font-size:12px;letter-spacing:-1.229px;">Help</div>
<div class="t" style="left:11px;top:74.84px;font-size:12px;letter-spacing:-0.606px;">Screen</div>
<div class="t" style="left:9px;top:182.84px;font-size:12px;font-weight:bold;letter-spacing:-0.045px;">Create...</div>
<div class="t" style="left:11px;top:201.84px;font-size:12px;letter-spacing:-0.274px;">Display...</div>
<div class="t" style="left:11px;top:218.84px;font-size:12px;letter-spacing:0.191px;">Modify...</div>
<div class="t" style="left:11px;top:235.84px;font-size:12px;letter-spacing:-0.545px;">Select...</div>
<div class="t" style="left:11px;top:252.84px;font-size:12px;letter-spacing:-0.484px;">Surface...</div>
<div class="t" style="left:248px;top:184.84px;font-size:12px;">col</div>
<div class="t" style="left:248px;top:204.84px;font-size:12px;">leftWheel</div>
<div class="t" style="left:248px;top:224.84px;font-size:12px;">rightWheel</div>
<div class="t" style="left:248px;top:244.84px;font-size:12px;">S160</div>
<div class="t" style="left:248px;top:264.84px;font-size:12px;">loaderArm</div>
<div class="t" style="left:248px;top:284.84px;font-size:12px;">attacherFrame</div>
<div class="t" style="left:248px;top:304.84px;font-size:12px;">implementCylinder</div>
<div class="t" style="left:248px;top:324.84px;font-size:12px;">implementCylinder01</div>
<div class="t" style="left:248px;top:344.84px;font-size:12px;">armDecal</div>
<div class="t" style="left:248px;top:364.84px;font-size:12px;">loaderCylinder</div>
<div class="t" style="left:248px;top:384.84px;font-size:12px;">loaderCylinder01</div>
<div class="t" style="left:248px;top:404.84px;font-size:12px;">leftPedal</div>
<div class="t" style="left:248px;top:424.84px;font-size:12px;">rightPedal</div>
<div class="t" style="left:248px;top:444.84px;font-size:12px;">safetyBar</div>
<div class="t" style="left:248px;top:464.84px;font-size:12px;">throttleLever</div>
<div class="t" style="left:248px;top:484.84px;font-size:12px;">panel</div>
<div class="t" style="left:248px;top:504.84px;font-size:12px;">key</div>
<div class="t" style="left:248px;top:524.84px;font-size:12px;">needle</div>
<div class="t" style="left:248px;top:544.84px;font-size:12px;">float1</div>
<div class="t" style="left:248px;top:564.84px;font-size:12px;">one</div>
<div class="t" style="left:248px;top:584.84px;font-size:12px;">ten</div>
<div class="t" style="left:248px;top:604.84px;font-size:12px;">window</div>
<div class="t" style="left:248px;top:624.84px;font-size:12px;">decals</div>
<div class="t" style="left:248px;top:644.84px;font-size:12px;">gyro</div>
<div class="t" style="left:417px;top:174.42px;font-size:12.5px;font-weight:bold;letter-spacing:-0.141px;">Left</div>
<div class="t" style="left:453px;top:170.84px;font-size:12px;">&lt;</div>
<div class="t" style="left:467px;top:170.84px;font-size:12px;letter-spacing:-0.227px;">Display</div>
<div class="t" style="left:1133.5px;top:174.42px;font-size:12.5px;font-weight:bold;letter-spacing:-1.130px;">Back</div>
<div class="t" style="left:1175px;top:170.84px;font-size:12px;">&lt;</div>
<div class="t" style="left:1189.5px;top:170.84px;font-size:12px;letter-spacing:-0.310px;">Display</div>
<div class="t" style="left:416.5px;top:525.42px;font-size:12.5px;font-weight:bold;letter-spacing:-0.984px;">3D</div>
<div class="t" style="left:446.5px;top:522.84px;font-size:12px;">&lt;</div>
<div class="t" style="left:461.5px;top:522.84px;font-size:12px;letter-spacing:-0.310px;">Display</div>
<div class="t" style="left:1133.5px;top:525.42px;font-size:12.5px;font-weight:bold;letter-spacing:-0.519px;">Perspective</div>
<div class="t" style="left:1213.5px;top:522.84px;font-size:12px;">&lt;</div>
<div class="t" style="left:1228.5px;top:522.84px;font-size:12px;letter-spacing:-0.310px;">Display</div>
<div class="t" style="left:465px;top:912.84px;font-size:12px;letter-spacing:-0.087px;">ZModeler is ready.</div>
<div class="t" style="left:240.5px;top:1001.84px;font-size:12px;letter-spacing:-0.766px;">Show all</div>
<div class="t" style="left:336.5px;top:1001.84px;font-size:12px;letter-spacing:-0.719px;">Hide all</div>
<div class="t" style="left:1574px;top:1025.84px;font-size:12px;font-weight:bold;letter-spacing:-0.945px;">SELECTED MODE</div>
<div class="t" style="left:1680px;top:1025.84px;font-size:12px;font-weight:bold;letter-spacing:-0.109px;">Auto</div>
<div class="t" style="left:1716.5px;top:1025.84px;font-size:12px;letter-spacing:-0.702px;">Cursor: -233.39996, -21.91262, -368.58</div>
<div class="t" style="left:1853.5px;top:1046.84px;font-size:12px;letter-spacing:-0.554px;color:#f0f0f0;">10:29 PM</div>
<div class="t" style="left:1851px;top:1063.84px;font-size:12px;letter-spacing:-0.062px;color:#f0f0f0;">11/6/2016</div>
</body></html>
